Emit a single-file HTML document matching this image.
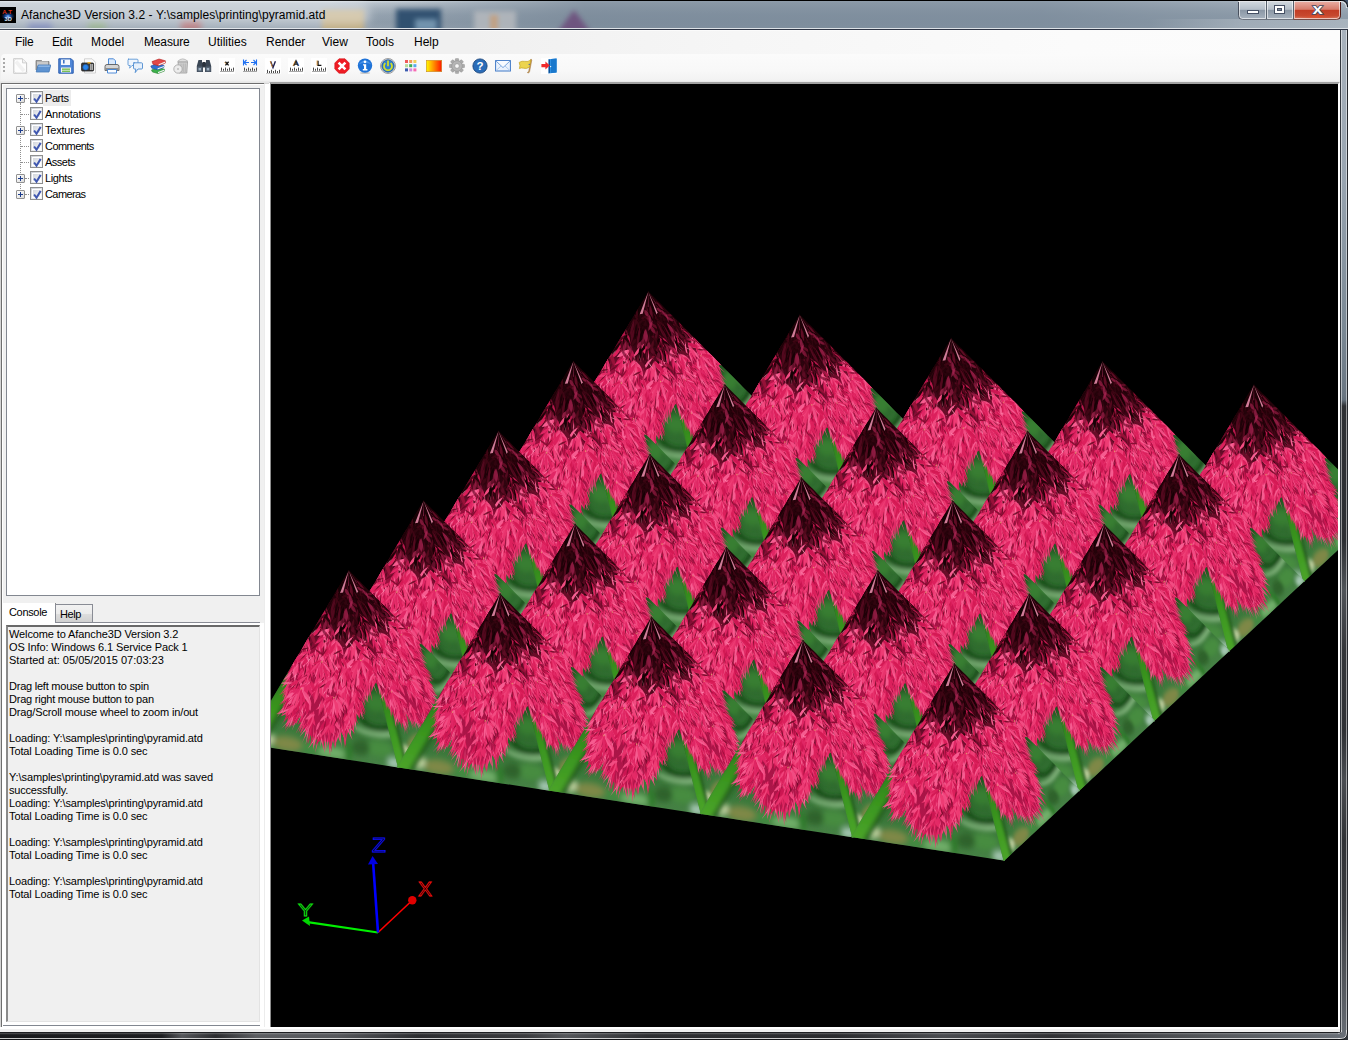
<!DOCTYPE html>
<html lang="en">
<head>
<meta charset="utf-8">
<title>Afanche3D Version 3.2 - Y:\samples\printing\pyramid.atd</title>
<style>
html,body{margin:0;padding:0;}
body{width:1348px;height:1040px;overflow:hidden;position:relative;background:#f0f0f0;font-family:"Liberation Sans",sans-serif;color:#000;}
.abs{position:absolute;}
svg{display:block;}
#titlebar{left:0;top:0;width:1348px;height:31px;background:linear-gradient(180deg,#000 0,#000 1px,#dfe5ea 1px,#c3ccd5 3px,#aab5c0 9px,#99a6b3 15px,#92a0ad 22px,#97a4b0 28px,#dde2e7 28px,#dde2e7 29px,#2e3545 29px,#2e3545 30px,#fbfbfb 30px,#fbfbfb 31px);}
#titleglow{left:-30px;top:4px;width:400px;height:22px;border-radius:11px;background:rgba(255,255,255,.42);filter:blur(5px);}
#tright{left:330px;top:1px;width:1018px;height:27px;background:linear-gradient(90deg,rgba(120,135,150,0) 0,rgba(118,134,150,.75) 25%,rgba(122,138,154,.8) 70%,rgba(135,150,164,.5) 100%);}
#title{left:21px;top:8px;font-size:12px;line-height:15px;white-space:nowrap;letter-spacing:.07px;}
#appicon{left:0;top:7px;width:16px;height:16px;background:#000;overflow:hidden;}
#menubar{left:0;top:31px;width:1340px;height:23px;background:linear-gradient(90deg,#f0f0f0 0,#f0f0f0 35%,#f6f6f6 55%,#fbfbfb 80%,#fcfcfc 100%);}
.mi{position:absolute;top:35px;font-size:12px;line-height:15px;white-space:nowrap;}
#toolbar{left:1px;top:54px;width:1339px;height:28px;background:linear-gradient(180deg,#fbfbfb 0,#f8f8f8 60%,#f1f1f1 100%);border-top-left-radius:4px;}
#tbshadow{left:0;top:81px;width:1340px;height:3px;background:linear-gradient(180deg,#ececec 0,#e4e4e4 2px,#c8c8c8 3px);}
.ic{position:absolute;top:58px;width:16px;height:16px;}
.ic svg{display:block;}
#rframe{left:1340px;top:30px;width:8px;height:1010px;background:linear-gradient(90deg,#33383f 0,#33383f 1px,rgba(255,255,255,.5) 1px,rgba(255,255,255,.5) 2px,rgba(255,255,255,0) 2px,rgba(255,255,255,0) 6px,rgba(255,255,255,.5) 6px,rgba(255,255,255,.5) 7px,#26292e 7px),linear-gradient(180deg,#a8b2bc 0,#98a4b0 150px,#7a8894 300px,#6a7682 365px,#64707c 370px,#2e3034 376px,#2c2e32 510px,#505459 560px,#34363a 620px,#2e3034 700px,#4a4d52 750px,#303236 810px,#393b3f 880px,#565a60 960px,#686e76 1010px);}
#bframe{left:0;top:1032px;width:1348px;height:8px;background:linear-gradient(180deg,#1e1f22 0,#1e1f22 1px,rgba(255,255,255,.28) 1px,rgba(255,255,255,.1) 2px,rgba(255,255,255,0) 3px,rgba(255,255,255,0) 6px,rgba(235,235,235,.85) 6px,rgba(235,235,235,.85) 7px,#141518 7px),linear-gradient(90deg,#1a1b1e 0,#1c1d20 12%,#55575b 13.5%,#2a2b2e 16%,#5c5e62 19%,#56585c 25%,#2c2d30 31%,#3a3b3e 39%,#55575b 42%,#2e2f32 48%,#2a2b2e 62%,#4a4c50 70%,#303134 78%,#55585c 90%,#6a7078 100%);}
#leftpanel{left:2px;top:84px;width:262px;height:943px;background:#f0f0f0;}
#tabpage{left:2px;top:623px;width:262px;height:404px;background:#fff;}
#lpbot{left:2px;top:1025px;width:258px;height:1px;background:#828790;}
#lpedge{left:0;top:83px;width:3px;height:949px;background:linear-gradient(90deg,#d4d4d4 0,#d4d4d4 1px,#6e6e6e 1px,#6e6e6e 2px,#fff 2px);}
#lptop{left:1px;top:83px;width:263px;height:1px;background:#6e6e6e;}
#lptop2{left:2px;top:84px;width:262px;height:1px;background:#fff;}
#treebox{left:6px;top:88px;width:254px;height:508px;box-sizing:border-box;border:1px solid #828790;background:#fff;}
.tr{position:absolute;left:45px;font-size:11px;line-height:13px;white-space:nowrap;}
.cb{position:absolute;left:30px;width:13px;height:13px;box-sizing:border-box;border:1px solid #8e8f8f;background:linear-gradient(135deg,#c9cdd5 0%,#e4e6ea 50%,#f8f9fa 100%);}
.cb::after{content:"";position:absolute;left:1px;top:1px;right:1px;bottom:1px;border:1px solid #fff;}
.cb svg{position:absolute;left:0;top:0;z-index:2;}
.pl{position:absolute;left:16px;width:9px;height:9px;box-sizing:border-box;border:1px solid #919191;background:linear-gradient(135deg,#fff,#dcdcdc);border-radius:1px;}
.pl::before{content:"";position:absolute;left:1px;top:3px;width:5px;height:1px;background:#1c3c8c;}
.pl::after{content:"";position:absolute;left:3px;top:1px;width:1px;height:5px;background:#1c3c8c;}
.dotv{position:absolute;left:20px;width:0;border-left:1px dotted #909090;}
.doth{position:absolute;height:0;border-top:1px dotted #909090;}
#tabline{left:56px;top:622px;width:204px;height:1px;background:#898c95;}
#tab1{left:2px;top:603px;width:53px;height:21px;background:#fff;border-right:1px solid #fff;box-shadow:inset -1px 0 0 #fff;}
#tab1c{left:55px;top:603px;width:1px;height:2px;background:#8c8c8c;}
#tab2{left:55px;top:604px;width:38px;height:19px;box-sizing:border-box;border:1px solid #898c95;border-bottom:none;background:linear-gradient(180deg,#f2f2f2 0,#ebebeb 50%,#dddddd 50%,#cfcfcf 100%);}
.tabt{position:absolute;font-size:11px;line-height:13px;white-space:nowrap;}
#console{left:6px;top:625px;width:254px;height:397px;box-sizing:border-box;border:1px solid #a0a0a0;border-top:2px solid #696969;border-left:2px solid #8a8a8a;border-right-color:#e3e3e3;border-bottom-color:#e3e3e3;background:#f0f0f0;}
#ctext{left:9px;top:628px;width:246px;font-size:11px;line-height:13px;white-space:pre;margin:0;}
#ctext div{height:13px;}
#splitter{left:264px;top:84px;width:6px;height:943px;background:linear-gradient(90deg,#ececec 0,#ececec 1px,#fff 1px);}
#vpborder{left:269px;top:82px;width:1071px;height:947px;box-sizing:border-box;border:2px solid #fff;border-top:2px solid #a2a2a2;border-left:2px solid #a8a8a8;border-left-color:#fff;background:#000;}
#vpl{left:270px;top:83px;width:1px;height:944px;background:#8c8c8c;}
#scenewrap{left:271px;top:84px;width:1067px;height:943px;overflow:hidden;background:#000;}
#botstrip{left:0;top:1027px;width:1340px;height:5px;background:linear-gradient(180deg,#fff 0,#fff 2px,#f0f0f0 2px,#f0f0f0 5px);}
#capbtns{left:1238px;top:1px;width:104px;height:20px;}
</style>
</head>
<body>
<div id="titlebar" class="abs"></div>
<div id="tright" class="abs"></div>
<div class="abs" style="left:0;top:1px;width:1240px;height:27px;overflow:hidden">
<div class="abs" style="left:322px;top:9px;width:42px;height:22px;background:#c2a56a;opacity:.8;filter:blur(2.5px)"></div>
<div class="abs" style="left:396px;top:8px;width:45px;height:24px;background:#27496a;opacity:.9;filter:blur(2.5px)"></div>
<div class="abs" style="left:415px;top:18px;width:22px;height:12px;background:#8fb0c8;opacity:.7;filter:blur(2.5px)"></div>
<div class="abs" style="left:474px;top:10px;width:42px;height:22px;background:#b9bcc0;opacity:.8;filter:blur(2.5px)"></div>
<div class="abs" style="left:490px;top:14px;width:8px;height:16px;background:#c89a70;opacity:.7;filter:blur(2px)"></div>
<div class="abs" style="left:556px;top:9px;width:0;height:0;border-left:18px solid transparent;border-right:18px solid transparent;border-bottom:24px solid #6b4778;opacity:.8;filter:blur(2.5px)"></div>
<div class="abs" style="left:28px;top:21px;width:24px;height:8px;background:#4a58b0;opacity:.55;filter:blur(3px)"></div>
<div class="abs" style="left:88px;top:21px;width:18px;height:8px;background:#7aa84a;opacity:.5;filter:blur(3px)"></div>
<div class="abs" style="left:181px;top:20px;width:20px;height:9px;background:#c03a3a;opacity:.6;filter:blur(3px)"></div>
</div>
<div id="titleglow" class="abs"></div>
<div id="appicon" class="abs"><svg width="16" height="16" viewBox="0 0 16 16"><rect width="16" height="16" fill="#000"/><defs><radialGradient id="aig"><stop offset="0" stop-color="#9fd0ff"/><stop offset=".3" stop-color="#2a6ad0" stop-opacity=".9"/><stop offset="1" stop-color="#0a2a70" stop-opacity="0"/></radialGradient></defs><ellipse cx="8" cy="9.2" rx="7" ry="4.2" fill="url(#aig)"/><text x="2.2" y="7" font-family="Liberation Sans, sans-serif" font-size="6.2" font-weight="bold" fill="#d8321c">A T</text><text x="4.6" y="14.4" font-family="Liberation Sans, sans-serif" font-size="5.6" font-weight="bold" fill="#dfe8f6">3D</text></svg></div>
<div id="title" class="abs">Afanche3D Version 3.2 - Y:\samples\printing\pyramid.atd</div>
<div id="capbtns" class="abs"><svg width="104" height="20" viewBox="0 0 104 20">
<defs>
<linearGradient id="cbg" x1="0" y1="0" x2="0" y2="1"><stop offset="0" stop-color="#d3dae0"/><stop offset=".45" stop-color="#b4bec8"/><stop offset=".5" stop-color="#8b97a5"/><stop offset="1" stop-color="#a9b4c0"/></linearGradient>
<linearGradient id="cbr" x1="0" y1="0" x2="0" y2="1"><stop offset="0" stop-color="#eab0a6"/><stop offset=".45" stop-color="#d67c6c"/><stop offset=".5" stop-color="#c23c24"/><stop offset=".8" stop-color="#c64a30"/><stop offset="1" stop-color="#e08a72"/></linearGradient>
<radialGradient id="cbglow" cx=".5" cy=".75" r=".5"><stop offset="0" stop-color="#e2502c" stop-opacity=".9"/><stop offset="1" stop-color="#c23c24" stop-opacity="0"/></radialGradient>
</defs>
<path d="M.5 0V14.5Q.5 18.5 4.5 18.5H98.5Q102.5 18.5 102.5 14.5V0Z" fill="url(#cbg)" stroke="#48505e" stroke-width="1"/>
<path d="M55.5 0V18.5H98.5Q102.5 18.5 102.5 14.5V0Z" fill="url(#cbr)" stroke="#4e1a14" stroke-width="1"/>
<rect x="60" y="8" width="38" height="10" fill="url(#cbglow)"/>
<path d="M1.5 0V14.5Q1.5 17.5 4.5 17.5H27.5V0M29.5 0V17.5H54.5V0M56.5 0V17.5H98.5Q101.5 17.5 101.5 14.5V0" fill="none" stroke="rgba(255,255,255,.6)" stroke-width="1"/>
<path d="M0 .5H103" stroke="rgba(255,255,255,.75)"/>
<line x1="28.5" y1="0" x2="28.5" y2="18" stroke="#56606c"/>
<line x1="55.5" y1="0" x2="55.5" y2="18" stroke="#56606c"/>
<rect x="9.5" y="9.5" width="11" height="3" fill="#fff" stroke="#465064" stroke-width="1"/>
<rect x="36.5" y="4.5" width="10" height="8" fill="#fff" stroke="#465064" stroke-width="1"/>
<rect x="39.5" y="7.5" width="4" height="2" fill="#7f8b99" stroke="#465064" stroke-width="1"/>
<text x="74.4" y="13.4" font-family="Liberation Sans, sans-serif" font-weight="bold" font-size="15.5" fill="#fff" stroke="#3d4862" stroke-width="1.5" paint-order="stroke" textLength="10.2" lengthAdjust="spacingAndGlyphs">x</text>
</svg></div>
<div class="abs" style="left:1150px;top:19px;width:198px;height:9px;background:linear-gradient(90deg,rgba(255,255,255,0),rgba(255,255,255,.2) 45%,rgba(255,255,255,.24))"></div>
<div class="abs" style="left:1340px;top:0;width:8px;height:8px"><svg width="8" height="8" viewBox="0 0 8 8"><path d="M1 0Q8 0 8 7V0Z" fill="#41536a"/><path d="M1 .5Q7.5 .5 7.5 7" fill="none" stroke="#10141a" stroke-width="1.2"/><path d="M0 1.5Q6.4 1.6 6.5 8" fill="none" stroke="rgba(255,255,255,.75)" stroke-width="1"/></svg></div>

<div id="menubar" class="abs"></div>
<div class="mi" style="left:15px;letter-spacing:-.2px">File</div>
<div class="mi" style="left:52px;letter-spacing:-.15px">Edit</div>
<div class="mi" style="left:91px;letter-spacing:.15px">Model</div>
<div class="mi" style="left:144px;letter-spacing:-.15px">Measure</div>
<div class="mi" style="left:208px">Utilities</div>
<div class="mi" style="left:266px">Render</div>
<div class="mi" style="left:322px">View</div>
<div class="mi" style="left:366px">Tools</div>
<div class="mi" style="left:414px">Help</div>

<div id="toolbar" class="abs"></div>
<div id="tbshadow" class="abs"></div>
<div class="ic" style="left:12px"><svg width="16" height="16" viewBox="0 0 16 16"><path d="M1.8 .8H10.5L14.6 4.9V15.2H1.8Z" fill="#fdfdfd" stroke="#bdbdbd" stroke-width=".9"/><path d="M10.5 .8V4.9H14.6" fill="#f2f2f2" stroke="#c8c8c8" stroke-width=".8"/><path d="M4 3.5L12 13" stroke="#f1f1f1" stroke-width="3.5"/><circle cx="2.3" cy="14.7" r=".8" fill="#fff" stroke="#bdbdbd" stroke-width=".4"/><circle cx="14.1" cy="14.7" r=".8" fill="#fff" stroke="#bdbdbd" stroke-width=".4"/><circle cx="2.3" cy="1.3" r=".8" fill="#fff" stroke="#bdbdbd" stroke-width=".4"/></svg></div>
<div class="ic" style="left:35px"><svg width="16" height="16" viewBox="0 0 16 16"><path d="M1 2.5H6.5L7.5 3.5H14V12H1Z" fill="#9a9a9a" stroke="#7d7d7d" stroke-width=".8"/><path d="M2 3.5H13V8H2Z" fill="#c9c9c9"/><path d="M3.2 7H15.8L14 14H1.2Z" fill="#5e93d1" stroke="#4478b8" stroke-width=".8"/><path d="M3.6 7.6H15L14.6 9H3.2Z" fill="#8ab4e4"/></svg></div>
<div class="ic" style="left:58px"><svg width="16" height="16" viewBox="0 0 16 16"><path d="M.8 .8H13.2L15.2 2.8V15.2H.8Z" fill="#4f86d6" stroke="#2a5cae" stroke-width="1"/><rect x="3" y="1.5" width="9" height="5.5" fill="#f4f7fc"/><rect x="5" y="2" width="1.6" height="3.5" fill="#3f74c4"/><rect x="3" y="9.5" width="10" height="5" fill="#f6f6f6"/><rect x="4" y="10.5" width="8" height="1.3" fill="#6cb844"/><rect x="4" y="12.6" width="8" height="1.3" fill="#6cb844"/></svg></div>
<div class="ic" style="left:81px"><svg width="16" height="16" viewBox="0 0 16 16"><path d="M3.5 .8H11L14.5 4.3V15H3.5Z" fill="#fcfcfc" stroke="#c6c6c6" stroke-width=".8"/><rect x=".6" y="5" width="12" height="8" rx="1" fill="#3c3c3c" stroke="#1d1d1d" stroke-width=".8"/><rect x="6.5" y="4" width="3" height="1.6" fill="#e9b030"/><rect x="9.3" y="6" width="1.2" height="6" fill="#d8d8d8"/><rect x="11" y="6" width=".9" height="6" fill="#bdbdbd"/><circle cx="4.6" cy="9.2" r="2.8" fill="#2b86ea" stroke="#1a56a8" stroke-width=".6"/></svg></div>
<div class="ic" style="left:104px"><svg width="16" height="16" viewBox="0 0 16 16"><path d="M4.5 .8H9.5L11.5 2.8V7H4.5Z" fill="#d9e8fb" stroke="#3c80d4" stroke-width=".9"/><path d="M1 8.5Q1 6.5 3 6.5H13Q15 6.5 15 8.5V12.5H1Z" fill="#d5d5d5" stroke="#5d5d5d" stroke-width=".9"/><rect x="1.4" y="10" width="13.2" height="2.4" fill="#8e8e8e"/><path d="M3.5 11.5H12.5V15H3.5Z" fill="#fafcff" stroke="#3c80d4" stroke-width=".9"/></svg></div>
<div class="ic" style="left:127px"><svg width="16" height="16" viewBox="0 0 16 16"><path d="M1 1.2H10Q11 1.2 11 2.2V6.5Q11 7.5 10 7.5H5L2.6 10.2L3.2 7.5H2Q1 7.5 1 6.5V2.2Q1 1.2 2 1.2Z" fill="#eef5fd" stroke="#5d97d6" stroke-width=".9"/><path d="M6.5 4.8H14.5Q15.5 4.8 15.5 5.8V10Q15.5 11 14.5 11H11L8.2 14.6L8.8 11H7.5Q6.5 11 6.5 10V5.8Q6.5 4.8 7.5 4.8Z" fill="#e6f0fb" stroke="#4d8bd0" stroke-width=".9"/></svg></div>
<div class="ic" style="left:150px"><svg width="16" height="16" viewBox="0 0 16 16"><path d="M1.5 12L8 9.5L14.5 11.2V13L8 15.5L2.5 14Z" fill="#3db04a" stroke="#23802e" stroke-width=".6"/><path d="M8 15.2L14.5 12.8V11.6L8 14Z" fill="#f4f4f4"/><path d="M.8 8L7 5.6L14 7.4V9.2L7.6 11.8L1.8 10.2Z" fill="#2f6fd0" stroke="#1c4e9e" stroke-width=".6"/><path d="M7.6 11.4L14 9V7.9L7.6 10.3Z" fill="#f4f4f4"/><path d="M2 3.6L9 1L15.4 2.8V5L8.6 7.8L3 6.2Z" fill="#e24848" stroke="#b42424" stroke-width=".6"/><path d="M8.6 7.4L15.2 4.7V3.6L8.6 6.2Z" fill="#f6f6f6"/></svg></div>
<div class="ic" style="left:173px"><svg width="16" height="16" viewBox="0 0 16 16"><path d="M5 4H14.5L13.8 15H6Z" fill="#d0d0d0" stroke="#9a9a9a" stroke-width=".8"/><path d="M4.6 3.4Q9.6 -1.6 15 3.4Z" fill="#e3e3e3" stroke="#a6a6a6" stroke-width=".7"/><path d="M8 5.5V14M10.2 5.5V14M12.2 5.5V14" stroke="#aaa" stroke-width=".8"/><circle cx="5" cy="11" r="4.2" fill="#ececec" stroke="#a2a2a2" stroke-width=".8"/><circle cx="5" cy="11" r="1" fill="#bdbdbd"/></svg></div>
<div class="ic" style="left:196px"><svg width="16" height="16" viewBox="0 0 16 16"><path d="M2.5 2H6V5H10V2H13.5L15.2 8V14H9V9.5H7V14H.8V8Z" fill="#3a4654"/><rect x="1.4" y="8.6" width="5" height="5" fill="#566474"/><rect x="9.6" y="8.6" width="5" height="5" fill="#566474"/><rect x="2.6" y="10" width="2.4" height="2.4" fill="#9fb1c2"/><rect x="10.8" y="10" width="2.4" height="2.4" fill="#9fb1c2"/><rect x="6.4" y="4" width="3.2" height="4.6" fill="#2a323c"/></svg></div>
<div class="ic" style="left:219px"><svg width="16" height="16" viewBox="0 0 16 16"><rect width="16" height="16" fill="#fff"/><path d="M1 13.5H15" stroke="#a8a8a8" stroke-width="1"/><path d="M2.5 9.6V12.8M4.5 10.8V12.8M6.5 9.6V12.8M8.5 10.8V12.8M10.5 9.6V12.8M12.5 10.8V12.8M14.5 9.6V12.8" stroke="#3a3a3a" stroke-width=".9"/><path d="M6.4 3.8L9.6 7.4M9.6 3.8L6.4 7.4" stroke="#111" stroke-width="1.3"/><path d="M5.8 4.4L6.8 5.6" stroke="#e08a20" stroke-width="1"/></svg></div>
<div class="ic" style="left:242px"><svg width="16" height="16" viewBox="0 0 16 16"><path d="M1 13.5H15" stroke="#a8a8a8" stroke-width="1"/><path d="M2.5 9.6V12.8M4.5 10.8V12.8M6.5 9.6V12.8M8.5 10.8V12.8M10.5 9.6V12.8M12.5 10.8V12.8M14.5 9.6V12.8" stroke="#3a3a3a" stroke-width=".9"/><path d="M1.5 1.5V7.5M14.5 1.5V7.5M2 4.5H7M9 4.5H14M4.5 2L2 4.5L4.5 7M11.5 2L14 4.5L11.5 7" stroke="#1d6ff2" stroke-width="1.1" fill="none"/></svg></div>
<div class="ic" style="left:265px"><svg width="16" height="16" viewBox="0 0 16 16"><rect width="16" height="16" fill="#fff"/><path d="M1 15.9H15" stroke="#a8a8a8" stroke-width="1"/><path d="M2.5 11.8V15M4.5 13V15M6.5 11.8V15M8.5 13V15M10.5 11.8V15M12.5 13V15M14.5 11.8V15" stroke="#3a3a3a" stroke-width=".9"/><path d="M5.6 3.2L8 9.6L10.4 3.2" stroke="#1a1a4a" stroke-width="1.35" fill="none"/><path d="M5.2 3L7.4 9" stroke="#e08a20" stroke-width=".8" fill="none"/></svg></div>
<div class="ic" style="left:288px"><svg width="16" height="16" viewBox="0 0 16 16"><rect width="16" height="16" fill="#fff"/><path d="M1 13.5H15" stroke="#a8a8a8" stroke-width="1"/><path d="M2.5 9.6V12.8M4.5 10.8V12.8M6.5 9.6V12.8M8.5 10.8V12.8M10.5 9.6V12.8M12.5 10.8V12.8M14.5 9.6V12.8" stroke="#3a3a3a" stroke-width=".9"/><path d="M5.6 8L8 2.8L10.4 8M6.6 6.2H9.4" stroke="#111" stroke-width="1.25" fill="none"/><path d="M5 8L7.2 3" stroke="#e08a20" stroke-width=".7"/><path d="M10.9 8L9 3.4" stroke="#2a6ae0" stroke-width=".7"/></svg></div>
<div class="ic" style="left:311px"><svg width="16" height="16" viewBox="0 0 16 16"><rect width="16" height="16" fill="#fff"/><path d="M1 13.5H15" stroke="#a8a8a8" stroke-width="1"/><path d="M2.5 9.6V12.8M4.5 10.8V12.8M6.5 9.6V12.8M8.5 10.8V12.8M10.5 9.6V12.8M12.5 10.8V12.8M14.5 9.6V12.8" stroke="#3a3a3a" stroke-width=".9"/><path d="M7 2.8V7.4H10.4" stroke="#111" stroke-width="1.35" fill="none"/><path d="M6.1 2.5V7.5" stroke="#e08a20" stroke-width=".8"/></svg></div>
<div class="ic" style="left:334px"><svg width="16" height="16" viewBox="0 0 16 16"><path d="M5 .8H11L15.2 5V11L11 15.2H5L.8 11V5Z" fill="#ee1c24" stroke="#d01018" stroke-width=".6"/><path d="M4.6 4.6L11.4 11.4M11.4 4.6L4.6 11.4" stroke="#fff" stroke-width="2.6" stroke-linecap="butt"/></svg></div>
<div class="ic" style="left:357px"><svg width="16" height="16" viewBox="0 0 16 16"><ellipse cx="8" cy="15" rx="5" ry="1" fill="#c8c8c8"/><circle cx="8" cy="7.6" r="7.2" fill="#1f73d8"/><path d="M1.5 6.5Q8 -1.5 14.5 6.5Q8 3.6 1.5 6.5Z" fill="#5aa0ee" opacity=".7"/><circle cx="8" cy="3.8" r="1.35" fill="#fff"/><path d="M6 6.2H9.2V11H10.4V12.4H5.8V11H7V7.6H6Z" fill="#fff"/></svg></div>
<div class="ic" style="left:380px"><svg width="16" height="16" viewBox="0 0 16 16"><circle cx="8" cy="8" r="7.5" fill="#f2f2f2" stroke="#777" stroke-width=".7"/><circle cx="8" cy="8" r="6.2" fill="#2f7fd0" stroke="#1d4f8a" stroke-width=".8"/><path d="M5.4 5.2A4 4 0 1 0 10.6 5.2" fill="none" stroke="#d8e020" stroke-width="1.7"/><path d="M8 2.6V8.2" stroke="#d8e020" stroke-width="1.7"/></svg></div>
<div class="ic" style="left:403px"><svg width="16" height="16" viewBox="0 0 16 16"><rect x="2" y="2" width="3" height="3" fill="#ee5a5a"/><rect x="6.2" y="2" width="3" height="3" fill="#f49a5c"/><rect x="10.4" y="2" width="3" height="3" fill="#f0cf5a"/><rect x="2" y="6.2" width="3" height="3" fill="#b9dc9a"/><rect x="6.2" y="6.2" width="3" height="3" fill="#3cae54"/><rect x="10.4" y="6.2" width="3" height="3" fill="#58a8ec"/><rect x="2" y="10.4" width="3" height="3" fill="#3a5cae"/><rect x="6.2" y="10.4" width="3" height="3" fill="#d58ae0"/><rect x="10.4" y="10.4" width="3" height="3" fill="#f86ab0"/></svg></div>
<div class="ic" style="left:426px"><svg width="16" height="16" viewBox="0 0 16 16"><defs><linearGradient id="gr18" x1="0" y1="0" x2="1" y2="0"><stop offset="0" stop-color="#fffb00"/><stop offset=".5" stop-color="#ff8a00"/><stop offset="1" stop-color="#ff1400"/></linearGradient></defs><rect x=".3" y="2.3" width="15.4" height="11.4" fill="url(#gr18)" stroke="#c98a28" stroke-width=".6"/></svg></div>
<div class="ic" style="left:449px"><svg width="16" height="16" viewBox="0 0 16 16"><g transform="translate(8 8)"><g fill="#ababab" stroke="#8c8c8c" stroke-width=".4"><rect x="-1.7" y="-7.6" width="3.4" height="15.2" rx=".8"/><rect x="-1.7" y="-7.6" width="3.4" height="15.2" rx=".8" transform="rotate(45)"/><rect x="-1.7" y="-7.6" width="3.4" height="15.2" rx=".8" transform="rotate(90)"/><rect x="-1.7" y="-7.6" width="3.4" height="15.2" rx=".8" transform="rotate(135)"/></g><circle r="5.3" fill="#b5b5b5" stroke="#8e8e8e" stroke-width=".5"/><circle r="2.3" fill="#f7f7f7" stroke="#909090" stroke-width=".6"/></g></svg></div>
<div class="ic" style="left:472px"><svg width="16" height="16" viewBox="0 0 16 16"><circle cx="8" cy="8" r="7.1" fill="#2a6cb8" stroke="#1b467c" stroke-width=".9"/><text x="8" y="12.2" text-anchor="middle" font-family="Liberation Sans, sans-serif" font-weight="bold" font-size="11.5" fill="#fff">?</text></svg></div>
<div class="ic" style="left:495px"><svg width="16" height="16" viewBox="0 0 16 16"><rect x=".6" y="2.6" width="14.8" height="10.4" fill="#eaf2fd" stroke="#3f78c6" stroke-width="1"/><path d="M1 3L8 9.6L15 3" fill="#f8fbff" stroke="#7aa6de" stroke-width="1"/><path d="M1 12.6L6 8M15 12.6L10 8" stroke="#a9c6ea" stroke-width=".9"/></svg></div>
<div class="ic" style="left:518px"><svg width="16" height="16" viewBox="0 0 16 16"><path d="M12.6 1.4Q13.6 1 13.8 2L11.6 13.6Q11.2 15.2 9.8 15L9.4 14.4Q10.6 14.2 10.8 13Z" fill="#c99a58" stroke="#9a6c30" stroke-width=".5"/><path d="M1.2 4.4Q4 2.6 6.8 3.4Q10 4.2 12.8 2L11.4 9Q8.6 11.2 5.6 10.2Q3 9.4 1.4 10.6Q2.6 7.6 1.2 4.4Z" fill="#ecd44e" stroke="#c4a422" stroke-width=".7"/><circle cx="11.2" cy="6.4" r=".6" fill="#3a60b4"/></svg></div>
<div class="ic" style="left:541px"><svg width="16" height="16" viewBox="0 0 16 16"><rect width="16" height="16" fill="#fff"/><path d="M7.6 1.2L15.6 .6V14.6L7.6 15.6Z" fill="#2f8fe0"/><path d="M10 1L15.6 .6V14.6L10 15Z" fill="#1a78cc"/><path d="M7.6 1.2L9 1.8V14.6L7.6 15.6Z" fill="#0e4f94"/><circle cx="9.6" cy="8.6" r=".7" fill="#fff"/><path d="M.4 6H4.4V3.6L8.8 7.6L4.4 11.6V9.2H.4Z" fill="#f02a2a"/></svg></div>
<div class="abs" style="left:3px;top:58px;width:2px;height:14px;background:repeating-linear-gradient(180deg,#a9a9a9 0,#a9a9a9 2px,transparent 2px,transparent 4px)"></div>

<div id="rframe" class="abs"></div>
<div id="leftpanel" class="abs"></div>
<div id="tabpage" class="abs"></div><div id="splitter" class="abs"></div><div id="lpbot" class="abs"></div><div id="lpedge" class="abs"></div><div id="lptop" class="abs"></div><div id="lptop2" class="abs"></div>
<div id="treebox" class="abs"></div>
<div class="abs" style="left:43px;top:90px;width:28px;height:16px;background:#ececec"></div>
<div class="dotv" style="top:103px;height:86px"></div>
<div class="doth" style="left:25px;top:98px;width:4px"></div>
<div class="pl" style="top:94px"></div>
<div class="cb" style="top:91px"><svg width="13" height="13" viewBox="0 0 13 13"><path d="M3.1 6.5L5.5 9.7L9.7 2.9" fill="none" stroke="#4058b0" stroke-width="2" stroke-linejoin="miter"/></svg></div>
<div class="tr" style="top:92px;letter-spacing:-0.438px">Parts</div>
<div class="doth" style="left:21px;top:114px;width:8px"></div>
<div class="cb" style="top:107px"><svg width="13" height="13" viewBox="0 0 13 13"><path d="M3.1 6.5L5.5 9.7L9.7 2.9" fill="none" stroke="#4058b0" stroke-width="2" stroke-linejoin="miter"/></svg></div>
<div class="tr" style="top:108px;letter-spacing:-0.237px">Annotations</div>
<div class="doth" style="left:25px;top:130px;width:4px"></div>
<div class="pl" style="top:126px"></div>
<div class="cb" style="top:123px"><svg width="13" height="13" viewBox="0 0 13 13"><path d="M3.1 6.5L5.5 9.7L9.7 2.9" fill="none" stroke="#4058b0" stroke-width="2" stroke-linejoin="miter"/></svg></div>
<div class="tr" style="top:124px;letter-spacing:-0.21px">Textures</div>
<div class="doth" style="left:21px;top:146px;width:8px"></div>
<div class="cb" style="top:139px"><svg width="13" height="13" viewBox="0 0 13 13"><path d="M3.1 6.5L5.5 9.7L9.7 2.9" fill="none" stroke="#4058b0" stroke-width="2" stroke-linejoin="miter"/></svg></div>
<div class="tr" style="top:140px;letter-spacing:-0.548px">Comments</div>
<div class="doth" style="left:21px;top:162px;width:8px"></div>
<div class="cb" style="top:155px"><svg width="13" height="13" viewBox="0 0 13 13"><path d="M3.1 6.5L5.5 9.7L9.7 2.9" fill="none" stroke="#4058b0" stroke-width="2" stroke-linejoin="miter"/></svg></div>
<div class="tr" style="top:156px;letter-spacing:-0.519px">Assets</div>
<div class="doth" style="left:25px;top:178px;width:4px"></div>
<div class="pl" style="top:174px"></div>
<div class="cb" style="top:171px"><svg width="13" height="13" viewBox="0 0 13 13"><path d="M3.1 6.5L5.5 9.7L9.7 2.9" fill="none" stroke="#4058b0" stroke-width="2" stroke-linejoin="miter"/></svg></div>
<div class="tr" style="top:172px;letter-spacing:-0.393px">Lights</div>
<div class="doth" style="left:25px;top:194px;width:4px"></div>
<div class="pl" style="top:190px"></div>
<div class="cb" style="top:187px"><svg width="13" height="13" viewBox="0 0 13 13"><path d="M3.1 6.5L5.5 9.7L9.7 2.9" fill="none" stroke="#4058b0" stroke-width="2" stroke-linejoin="miter"/></svg></div>
<div class="tr" style="top:188px;letter-spacing:-0.589px">Cameras</div>

<div id="tab1" class="abs"></div><div id="tab1c" class="abs"></div>
<div id="tab2" class="abs"></div>
<div id="tabline" class="abs"></div>
<div class="tabt" style="left:9px;top:606px;letter-spacing:-.33px">Console</div>
<div class="tabt" style="left:60px;top:608px;letter-spacing:-.45px">Help</div>
<div id="console" class="abs"></div>
<div id="ctext" class="abs"><div style="letter-spacing:-0.111px">Welcome to Afanche3D Version 3.2</div><div style="letter-spacing:-0.12px">OS Info: Windows 6.1 Service Pack 1</div><div style="letter-spacing:0.002px">Started at: 05/05/2015 07:03:23</div><div></div><div style="letter-spacing:-0.232px">Drag left mouse button to spin</div><div style="letter-spacing:-0.229px">Drag right mouse button to pan</div><div style="letter-spacing:-0.143px">Drag/Scroll mouse wheel to zoom in/out</div><div></div><div style="letter-spacing:-0.118px">Loading: Y:\samples\printing\pyramid.atd</div><div style="letter-spacing:-0.116px">Total Loading Time is 0.0 sec</div><div></div><div style="letter-spacing:-0.11px">Y:\samples\printing\pyramid.atd was saved</div><div style="letter-spacing:-0.196px">successfully.</div><div style="letter-spacing:-0.118px">Loading: Y:\samples\printing\pyramid.atd</div><div style="letter-spacing:-0.116px">Total Loading Time is 0.0 sec</div><div></div><div style="letter-spacing:-0.118px">Loading: Y:\samples\printing\pyramid.atd</div><div style="letter-spacing:-0.116px">Total Loading Time is 0.0 sec</div><div></div><div style="letter-spacing:-0.118px">Loading: Y:\samples\printing\pyramid.atd</div><div style="letter-spacing:-0.116px">Total Loading Time is 0.0 sec</div></div>

<div id="vpborder" class="abs"></div><div id="vpl" class="abs"></div>
<div id="scenewrap" class="abs">
<svg id="scene" width="1067" height="943" viewBox="271 84 1067 943">
<defs>
<clipPath id="tri"><polygon points="50,-0.6 -0.9,100.5 100.9,100.5"/></clipPath>
<linearGradient id="gbg" x1="0" y1="0" x2="0" y2="1"><stop offset="0" stop-color="#1c4e1d"/><stop offset=".3" stop-color="#276026"/><stop offset=".6" stop-color="#347234"/><stop offset="1" stop-color="#478246"/></linearGradient>
<linearGradient id="fl" x1="0" y1="0" x2="0" y2="100" gradientUnits="userSpaceOnUse" ><stop offset="0" stop-color="#1c0206"/><stop offset=".27" stop-color="#2e040f"/><stop offset=".36" stop-color="#520a20"/><stop offset=".45" stop-color="#960f3c"/><stop offset=".7" stop-color="#a81446"/><stop offset="1" stop-color="#b8184e"/></linearGradient>
<linearGradient id="stem" x1="0" y1="60" x2="0" y2="100" gradientUnits="userSpaceOnUse"><stop offset="0" stop-color="#2e7c1e"/><stop offset=".5" stop-color="#3a961f"/><stop offset="1" stop-color="#4aa428"/></linearGradient>
<filter id="bl1" x="-20%" y="-20%" width="140%" height="140%"><feGaussianBlur stdDeviation="1.3"/></filter>
<filter id="bl2" x="-20%" y="-20%" width="140%" height="140%"><feGaussianBlur stdDeviation="1.6"/></filter>
<clipPath id="vp"><rect x="271" y="84" width="1067" height="943"/></clipPath>
</defs>
<rect x="271" y="84" width="1067" height="943" fill="#000"/>
<defs><g id="tex" clip-path="url(#tri)">
<rect x="-2" y="50" width="104" height="52" fill="url(#gbg)"/>
<g filter="url(#bl2)">
<ellipse cx="80" cy="68" rx="7" ry="5" fill="#387e33"/>
<ellipse cx="91" cy="71" rx="5" ry="3.5" fill="#4a9040"/>
<ellipse cx="86" cy="92" rx="9" ry="4.5" fill="#468c40"/>
<ellipse cx="74" cy="93" rx="6" ry="4" fill="#2e622a"/>
<ellipse cx="97" cy="98.5" rx="5" ry="3" fill="#a6c8b4"/>
<ellipse cx="56" cy="98" rx="11" ry="3" fill="#72b06a"/>
<ellipse cx="42" cy="97" rx="6" ry="3" fill="#428c40"/>
<ellipse cx="26" cy="97" rx="10" ry="4" fill="#7f8846"/>
<ellipse cx="13" cy="96" rx="4.5" ry="3.5" fill="#c2d2a2"/>
<ellipse cx="66" cy="96" rx="2.5" ry="6" fill="#2f7a2a" transform="rotate(-20 66 96)"/>
</g>
<g filter="url(#bl1)">
<polygon points="19,60 27.5,60 6.8,102 -3,102" fill="url(#stem)"/>
<polygon points="27.5,60 30,62 9.6,102 6.8,102" fill="#245a1b"/>
<path d="M68 60Q68 76 78 79.5Q87 81.5 97 75.5L97 80Q85 84.2 76 81.6Q65.5 78 66.5 60Z" fill="#164a18"/>
<path d="M68.5 81.6Q80 86.4 97 81.4L97 83.6Q80 88.2 68.5 83.4Z" fill="#9cc894"/>
</g>
<polygon points="50,-2 -2,57.5 20.8,59.5 20.6,70 22,79.5 25.5,85 29.5,84 32.3,79 34.2,86 38.5,90 45,92.3 52,92.8 57,91.2 60.2,86 62.3,87.6 65.2,83.5 67.6,77.5 68.2,72 70,73.5 71,67.5 72.2,62.5 77,57.5 102,56.5" fill="url(#fl)"/>
<path d="M50.2 3Q50.3 6.9 53.8 9.7Q53.4 5.2 50.2 3Z" fill="#1e0208"/>
<path d="M54 5.5Q53.7 9 56.3 12.4Q56.3 8.2 54 5.5Z" fill="#2a040d"/>
<path d="M47.5 6.2Q48.8 10.2 53.5 11.7Q51.6 7.1 47.5 6.2Z" fill="#1e0208"/>
<path d="M50.6 5.4Q48.6 9.6 49.4 15.2Q51.5 10 50.6 5.4Z" fill="#1e0208"/>
<path d="M49.8 6.7Q46.3 7.1 44.9 11Q48.9 10.1 49.8 6.7Z" fill="#3e0614"/>
<path d="M46.6 7Q44.6 10.8 46.9 15.1Q48.9 10.6 46.6 7Z" fill="#30050f"/>
<path d="M48.5 6.8Q48.6 10.6 52.1 13.3Q51.7 8.9 48.5 6.8Z" fill="#52091e"/>
<path d="M48.4 6.9Q48.5 11.2 52.8 14Q52.3 8.9 48.4 6.9Z" fill="#30050f"/>
<path d="M47.6 10.1Q44.4 10.5 42.5 14Q46.3 13.1 47.6 10.1Z" fill="#5e0c24"/>
<path d="M49.6 6.7Q49.5 11.8 52.9 16.9Q52.7 10.8 49.6 6.7Z" fill="#52091e"/>
<path d="M45.2 9Q46.3 13.6 50.9 16.9Q49.2 11.5 45.2 9Z" fill="#24030a"/>
<path d="M47.1 5.7Q45.6 10 48.7 14.5Q50 9.3 47.1 5.7Z" fill="#24030a"/>
<path d="M53.5 7.6Q52.8 10.6 55 13.5Q55.6 9.9 53.5 7.6Z" fill="#2a040d"/>
<path d="M52.1 6.5Q51.8 11.3 55.3 15.7Q55.3 10.1 52.1 6.5Z" fill="#5e0c24"/>
<path d="M48.8 9.1Q51.3 13 56.3 15.2Q53.1 10.7 48.8 9.1Z" fill="#160205"/>
<path d="M47.8 7.4Q43.8 8.8 42.7 13.8Q47.3 11.6 47.8 7.4Z" fill="#1e0208"/>
<path d="M48.8 6Q47.1 10.3 50.1 14.8Q51.7 9.6 48.8 6Z" fill="#2a040d"/>
<path d="M47.4 6.2Q43.6 9.2 41.9 14.8Q46.4 11 47.4 6.2Z" fill="#160205"/>
<path d="M48 6.4Q44.5 8.8 45.4 13.6Q49.2 10.5 48 6.4Z" fill="#160205"/>
<path d="M44 8.8Q43.2 12.3 45.2 16.1Q45.8 11.9 44 8.8Z" fill="#3e0614"/>
<path d="M50.7 12.9Q51.5 17.2 56.1 19.3Q54.8 14.4 50.7 12.9Z" fill="#5e0c24"/>
<path d="M45.8 13.4Q44.3 17 46.8 20.8Q48.2 16.5 45.8 13.4Z" fill="#2a040d"/>
<path d="M48 11.7Q48.6 15.9 52.1 19.7Q51.1 14.6 48 11.7Z" fill="#30050f"/>
<path d="M53.2 12.2Q52.3 15 54.8 17.3Q55.6 14 53.2 12.2Z" fill="#2a040d"/>
<path d="M53.8 14.7Q52.9 19 54.6 24.1Q55.4 18.8 53.8 14.7Z" fill="#30050f"/>
<path d="M44.3 14.1Q40.7 19.1 42 26.2Q45.8 20.1 44.3 14.1Z" fill="#1e0208"/>
<path d="M50.4 14.5Q48.8 18.5 52.5 21.9Q53.9 17.1 50.4 14.5Z" fill="#24030a"/>
<path d="M52.3 11.6Q48.5 12.6 46.9 17.1Q51.3 15.4 52.3 11.6Z" fill="#3e0614"/>
<path d="M57.6 13.2Q58.6 16.3 62.3 16.6Q60.9 13.2 57.6 13.2Z" fill="#30050f"/>
<path d="M53.8 11.9Q51.2 15.6 52 20.9Q54.7 16.2 53.8 11.9Z" fill="#30050f"/>
<path d="M50.9 15.3Q49.7 21.6 52.9 28.5Q53.9 21 50.9 15.3Z" fill="#52091e"/>
<path d="M52.4 14.1Q51.1 18.3 54.1 22.6Q55.2 17.5 52.4 14.1Z" fill="#52091e"/>
<path d="M54 14.8Q50 16.1 48.7 20.9Q53.2 18.9 54 14.8Z" fill="#2a040d"/>
<path d="M42.7 15Q38.8 19.5 38.4 26.6Q42.8 20.9 42.7 15Z" fill="#30050f"/>
<path d="M49.6 14.1Q51.3 19.3 57.5 21.3Q54.9 15.4 49.6 14.1Z" fill="#2a040d"/>
<path d="M49 13.4Q45.2 15.6 43.9 20.7Q48.2 17.7 49 13.4Z" fill="#3e0614"/>
<path d="M43.3 13.3Q44.5 18 49.3 21Q47.5 15.6 43.3 13.3Z" fill="#3e0614"/>
<path d="M51 15.3Q50.1 19.7 54 23.2Q54.6 18 51 15.3Z" fill="#3e0614"/>
<path d="M41.2 16.2Q37.1 19.4 35.8 25.4Q40.5 21.3 41.2 16.2Z" fill="#3e0614"/>
<path d="M45.4 13.5Q46 17.6 50.6 19.2Q49.5 14.5 45.4 13.5Z" fill="#24030a"/>
<path d="M44.4 15.2Q40.5 16.1 38.3 20.3Q42.8 18.9 44.4 15.2Z" fill="#3e0614"/>
<path d="M43.2 14.4Q44.8 19.1 50.2 21.3Q47.9 15.9 43.2 14.4Z" fill="#2a040d"/>
<path d="M49.8 17.4Q46.5 22.7 48.2 29.9Q51.6 23.3 49.8 17.4Z" fill="#1e0208"/>
<path d="M43.2 13Q39.5 17.6 38.3 24.6Q42.4 18.9 43.2 13Z" fill="#1e0208"/>
<path d="M50 15.1Q52.3 19 57.3 20.9Q54.3 16.4 50 15.1Z" fill="#5e0c24"/>
<path d="M42.8 14.3Q44.1 19.6 49.7 22.7Q47.7 16.7 42.8 14.3Z" fill="#1e0208"/>
<path d="M53.7 13.9Q50.2 15 49.6 19.2Q53.5 17.6 53.7 13.9Z" fill="#3e0614"/>
<path d="M53.9 15.8Q50.8 17.6 50 21.7Q53.5 19.3 53.9 15.8Z" fill="#5e0c24"/>
<path d="M50.2 14.2Q46 16.1 43.2 20.9Q48.1 18.3 50.2 14.2Z" fill="#30050f"/>
<path d="M53.6 18.1Q53.8 22.3 58 24.7Q57.4 19.9 53.6 18.1Z" fill="#52091e"/>
<path d="M49.3 16.9Q50.7 21.2 55.4 23.7Q53.5 18.7 49.3 16.9Z" fill="#30050f"/>
<path d="M42.9 18Q39.6 22.7 38.9 29.6Q42.6 23.7 42.9 18Z" fill="#1e0208"/>
<path d="M53 14.7Q49.6 17.4 48.7 22.6Q52.6 19.1 53 14.7Z" fill="#30050f"/>
<path d="M44.5 15Q43.6 20.9 46.5 27.5Q47.2 20.3 44.5 15Z" fill="#1e0208"/>
<path d="M43.3 15.2Q44.4 19.2 48.9 21.2Q47.3 16.6 43.3 15.2Z" fill="#3e0614"/>
<path d="M49.3 18.2Q46.7 22.2 46.9 27.8Q49.7 22.9 49.3 18.2Z" fill="#2a040d"/>
<path d="M51 14.9Q49.7 21.1 51.8 28.5Q52.9 20.9 51 14.9Z" fill="#30050f"/>
<path d="M49.8 14.2Q51.4 18 55.7 20.2Q53.6 15.9 49.8 14.2Z" fill="#24030a"/>
<path d="M49.2 19.4Q45 21.3 43.4 26.6Q48.2 23.9 49.2 19.4Z" fill="#1e0208"/>
<path d="M43.5 15.7Q40.8 20.7 42.4 27.4Q45.3 21.2 43.5 15.7Z" fill="#52091e"/>
<path d="M50.8 14.5Q48.9 18.5 51.2 23.2Q53 18.3 50.8 14.5Z" fill="#30050f"/>
<path d="M49.1 19.3Q49 22.4 51.5 25.1Q51.4 21.4 49.1 19.3Z" fill="#24030a"/>
<path d="M53 15.9Q56.3 18.9 61.6 19.3Q57.4 16 53 15.9Z" fill="#5e0c24"/>
<path d="M44.5 14.5Q43.1 19.2 46.2 23.9Q47.4 18.4 44.5 14.5Z" fill="#3e0614"/>
<path d="M59.9 18.5Q57.5 22.4 58.1 27.7Q60.7 23 59.9 18.5Z" fill="#52091e"/>
<path d="M51.4 18.1Q52.4 22.4 57.4 23Q55.8 18.2 51.4 18.1Z" fill="#24030a"/>
<path d="M44.3 17.9Q42.6 22.3 44 27.7Q45.8 22.4 44.3 17.9Z" fill="#3e0614"/>
<path d="M45.6 17.5Q44 20.2 45.2 23.8Q46.9 20.4 45.6 17.5Z" fill="#1e0208"/>
<path d="M40.3 16.7Q37.4 18.4 38 22.2Q41.2 19.9 40.3 16.7Z" fill="#1e0208"/>
<path d="M50.3 21Q50.6 23.6 53.4 25.1Q52.7 22 50.3 21Z" fill="#5e0c24"/>
<path d="M53.1 19.5Q52 25.8 55.6 32.7Q56.4 25 53.1 19.5Z" fill="#2a040d"/>
<path d="M49.6 18Q51.6 22 56.7 23.5Q54 19 49.6 18Z" fill="#24030a"/>
<path d="M64.5 22Q60.8 26.4 61.3 33.2Q65.3 27.7 64.5 22Z" fill="#5e0c24"/>
<path d="M51.1 18.5Q48.7 22.4 49.3 27.9Q51.8 23 51.1 18.5Z" fill="#2a040d"/>
<path d="M51.5 19.7Q50.8 23.9 55.1 25.9Q55.4 21.1 51.5 19.7Z" fill="#52091e"/>
<path d="M52.4 16.5Q51.4 21.9 54.6 27.7Q55.3 21.2 52.4 16.5Z" fill="#2a040d"/>
<path d="M62.9 21.4Q63.5 26.6 68.7 30Q67.6 23.9 62.9 21.4Z" fill="#1e0208"/>
<path d="M50.2 20.9Q49.9 26.6 55 31Q54.8 24.3 50.2 20.9Z" fill="#52091e"/>
<path d="M47.7 18.9Q46 25 47.9 32.5Q49.6 25 47.7 18.9Z" fill="#52091e"/>
<path d="M51.5 20.9Q51.8 24.9 55.4 28.1Q54.7 23.4 51.5 20.9Z" fill="#5e0c24"/>
<path d="M36.8 22.6Q32.6 24.8 31.4 30.2Q36.1 27.2 36.8 22.6Z" fill="#160205"/>
<path d="M38 20.7Q39.1 25 42.9 28.7Q41.3 23.6 38 20.7Z" fill="#680e28"/>
<path d="M49.8 18.9Q48.4 24.2 51 30.2Q52.2 23.8 49.8 18.9Z" fill="#30050f"/>
<path d="M59 18.5Q60.7 22.3 65 24.4Q62.8 20 59 18.5Z" fill="#160205"/>
<path d="M44.2 20.7Q41.9 24.7 42.9 30.1Q45.3 25.1 44.2 20.7Z" fill="#52091e"/>
<path d="M62.5 22.2Q59.6 24.5 58.9 29Q62.2 26 62.5 22.2Z" fill="#160205"/>
<path d="M41.2 23Q37.6 28.3 38.5 35.9Q42.4 29.3 41.2 23Z" fill="#30050f"/>
<path d="M40.2 23.2Q36.2 23.8 34 28Q38.7 27 40.2 23.2Z" fill="#2a040d"/>
<path d="M49 18.4Q48.5 22.4 52.5 24.5Q52.7 19.9 49 18.4Z" fill="#2a040d"/>
<path d="M64.5 21.5Q62 25.6 63.7 31Q66.4 25.9 64.5 21.5Z" fill="#30050f"/>
<path d="M63.1 21.3Q59.8 25.3 60.3 31.5Q63.9 26.5 63.1 21.3Z" fill="#1e0208"/>
<path d="M40.9 22Q40.1 26.3 43.2 30.4Q43.8 25.3 40.9 22Z" fill="#30050f"/>
<path d="M37.5 21.4Q35.9 27 39 33.3Q40.4 26.5 37.5 21.4Z" fill="#52091e"/>
<path d="M46.8 21.4Q44.9 25.1 45.3 30Q47.3 25.5 46.8 21.4Z" fill="#1e0208"/>
<path d="M37.8 23.9Q33.9 28.6 34.6 35.9Q38.9 29.9 37.8 23.9Z" fill="#500a1c"/>
<path d="M36.4 23.9Q36.3 27.9 40.5 29.8Q40.3 25.1 36.4 23.9Z" fill="#52091e"/>
<path d="M64.4 23.1Q67 27 72.4 26.7Q69 22.5 64.4 23.1Z" fill="#3e0614"/>
<path d="M39.1 23.9Q38.4 27.9 40.9 31.9Q41.5 27.2 39.1 23.9Z" fill="#24030a"/>
<path d="M57.6 23.5Q56.3 26 58.4 28.6Q59.6 25.5 57.6 23.5Z" fill="#3e0614"/>
<path d="M37.9 25.3Q34.4 29.5 35.9 35.8Q39.6 30.5 37.9 25.3Z" fill="#30050f"/>
<path d="M50.8 20.2Q49.9 25.8 53.9 31.4Q54.5 24.6 50.8 20.2Z" fill="#52091e"/>
<path d="M50.1 19.7Q47.9 22.9 49.1 27.4Q51.4 23.4 50.1 19.7Z" fill="#160205"/>
<path d="M38.1 22.5Q35.6 26.9 38.1 32.3Q40.6 26.9 38.1 22.5Z" fill="#b8184c"/>
<path d="M58 23.1Q58.1 26.5 61.2 28.8Q60.8 24.9 58 23.1Z" fill="#3e0614"/>
<path d="M63.9 23.1Q65.3 26.3 69.2 27.4Q67.3 23.7 63.9 23.1Z" fill="#52091e"/>
<path d="M38.7 25.5Q37.5 29.2 41.1 31.8Q42.1 27.5 38.7 25.5Z" fill="#5e0c24"/>
<path d="M50.4 20.9Q48 26 49.7 32.5Q52.1 26.2 50.4 20.9Z" fill="#1e0208"/>
<path d="M39.3 24.3Q34.6 24.1 31.7 28.6Q37.1 28.4 39.3 24.3Z" fill="#b8184c"/>
<path d="M61.9 21.3Q62.8 25.4 66.9 28.3Q65.5 23.5 61.9 21.3Z" fill="#b8184c"/>
<path d="M46.3 23.7Q45.3 27.6 46.8 32.1Q47.7 27.4 46.3 23.7Z" fill="#30050f"/>
<path d="M64.4 22.4Q66.2 25.5 70.3 25.8Q68 22.4 64.4 22.4Z" fill="#24030a"/>
<path d="M64.3 24.4Q65.7 28.5 70.2 31Q68.2 26.3 64.3 24.4Z" fill="#1e0208"/>
<path d="M37.7 26.1Q33.7 27 32.6 31.6Q37.1 30.1 37.7 26.1Z" fill="#30050f"/>
<path d="M53.3 26.3Q51.3 31.7 52.7 38.5Q54.8 31.9 53.3 26.3Z" fill="#680e28"/>
<path d="M63.5 23.9Q65.6 28.9 71.2 32.2Q68.3 26.4 63.5 23.9Z" fill="#1e0208"/>
<path d="M41.4 24Q37.6 25.1 36.5 29.6Q40.8 27.9 41.4 24Z" fill="#160205"/>
<path d="M54.3 25.9Q52 28.6 53 32.6Q55.4 29.2 54.3 25.9Z" fill="#3e0614"/>
<path d="M37.6 21.7Q34.1 24.4 32.1 29.3Q36.1 25.8 37.6 21.7Z" fill="#3e0614"/>
<path d="M62.8 27.7Q58.5 30.8 57.3 36.9Q62 32.9 62.8 27.7Z" fill="#7e102e"/>
<path d="M62.5 23Q59.9 26.5 62.5 30.9Q65 26.5 62.5 23Z" fill="#24030a"/>
<path d="M62.8 27.4Q58.9 29 58.3 33.8Q62.7 31.6 62.8 27.4Z" fill="#30050f"/>
<path d="M39.4 25Q38.2 28 39.8 31.5Q40.9 27.8 39.4 25Z" fill="#24030a"/>
<path d="M39.8 24.4Q35.6 26.2 32.8 30.9Q37.7 28.5 39.8 24.4Z" fill="#52091e"/>
<path d="M36.6 27.2Q37.8 31.8 42.4 35.3Q40.5 29.9 36.6 27.2Z" fill="#2a040d"/>
<path d="M52 25.3Q49.6 28.6 51.2 33.1Q53.7 29 52 25.3Z" fill="#52091e"/>
<path d="M38.5 26.3Q37.5 30.1 40.5 33.6Q41.3 29.1 38.5 26.3Z" fill="#2a040d"/>
<path d="M63.1 23.7Q60.2 27.4 61.5 32.7Q64.6 28.2 63.1 23.7Z" fill="#961238"/>
<path d="M37.1 23.8Q32.8 25.8 30.8 30.9Q35.7 28.3 37.1 23.8Z" fill="#3e0614"/>
<path d="M40.4 24Q40 27.5 43.1 30.3Q43.2 26.2 40.4 24Z" fill="#b8184c"/>
<path d="M54.1 27.9Q51.1 32.4 52.8 38.6Q56 33 54.1 27.9Z" fill="#52091e"/>
<path d="M65.7 23.6Q65.2 29.5 69.6 35Q69.7 28 65.7 23.6Z" fill="#5e0c24"/>
<path d="M36 27.3Q36.9 31.9 41.4 35.2Q40 29.8 36 27.3Z" fill="#aa1646"/>
<path d="M35.8 27.7Q34.9 31.3 38.1 34.2Q38.8 29.9 35.8 27.7Z" fill="#52091e"/>
<path d="M53 27.9Q52.6 34.1 55.3 41.1Q55.5 33.6 53 27.9Z" fill="#b8184c"/>
<path d="M49.7 28.2Q49.3 32.1 53.1 34.7Q53.2 30.1 49.7 28.2Z" fill="#b8184c"/>
<path d="M56.6 23.9Q58 27.9 62.2 30.6Q60.3 25.9 56.6 23.9Z" fill="#30050f"/>
<path d="M53.6 28.6Q51.5 35 54.6 42.4Q56.5 34.6 53.6 28.6Z" fill="#52091e"/>
<path d="M39 25.7Q39 30.6 43.8 33.7Q43.4 28 39 25.7Z" fill="#b8184c"/>
<path d="M62 25Q61.6 30.9 64.4 37.4Q64.6 30.3 62 25Z" fill="#24030a"/>
<path d="M53.7 27.9Q55.6 32.3 61 34.1Q58.4 29 53.7 27.9Z" fill="#3e0614"/>
<path d="M61.2 27.9Q62 31.6 66.3 33.2Q65 28.9 61.2 27.9Z" fill="#aa1646"/>
<path d="M54.7 27.6Q55.2 31.8 59.9 33.1Q58.9 28.3 54.7 27.6Z" fill="#5e0c24"/>
<path d="M55.2 25.9Q54.2 30.1 56.5 34.8Q57.4 29.7 55.2 25.9Z" fill="#30050f"/>
<path d="M37.5 28.6Q38.3 33.7 43.1 37.5Q41.8 31.5 37.5 28.6Z" fill="#b8184c"/>
<path d="M36.3 26.9Q32.4 28.3 31.7 33.1Q36.1 31 36.3 26.9Z" fill="#160205"/>
<path d="M35 28.1Q35.8 31.7 39.8 33.7Q38.5 29.5 35 28.1Z" fill="#aa1646"/>
<path d="M42.4 29.3Q42.4 32.8 45 36.2Q44.8 32 42.4 29.3Z" fill="#cc1652"/>
<path d="M36.6 25.8Q33.3 26 31.3 29.3Q35.2 28.8 36.6 25.8Z" fill="#3e0614"/>
<path d="M62.1 29.3Q61.4 35 64 41.3Q64.5 34.5 62.1 29.3Z" fill="#ee3c74"/>
<path d="M38.4 26.5Q34.2 27.3 33.3 32.1Q38 30.7 38.4 26.5Z" fill="#3e0614"/>
<path d="M62.3 29.1Q60.9 33.6 63 38.7Q64.4 33.3 62.3 29.1Z" fill="#1e0208"/>
<path d="M42.9 28.5Q38.1 29.9 36.6 35.5Q42 33.4 42.9 28.5Z" fill="#961238"/>
<path d="M54.4 29.2Q50.7 32.8 51.8 38.6Q55.7 34.1 54.4 29.2Z" fill="#aa1646"/>
<path d="M38.4 25.1Q38.8 29.8 43.9 32Q42.9 26.5 38.4 25.1Z" fill="#24030a"/>
<path d="M57.8 25Q55.8 27.6 56.8 31.3Q59 28.1 57.8 25Z" fill="#500a1c"/>
<path d="M60 30.2Q61.3 33.7 65.5 35Q63.7 31 60 30.2Z" fill="#30050f"/>
<path d="M61.3 28.9Q61.4 34.1 65.5 38.7Q65.1 32.5 61.3 28.9Z" fill="#680e28"/>
<path d="M46.4 25.8Q43.6 26.7 43.8 30.1Q46.9 28.7 46.4 25.8Z" fill="#3e0614"/>
<path d="M52.1 30.6Q48.8 32.9 48 37.6Q51.7 34.6 52.1 30.6Z" fill="#30050f"/>
<path d="M46.8 27.9Q45.7 32.7 48.8 37.7Q49.8 31.9 46.8 27.9Z" fill="#3e0614"/>
<path d="M52.4 30Q54.3 34.2 59.2 36.9Q56.6 32 52.4 30Z" fill="#5e0c24"/>
<path d="M42.1 28Q39 31.7 38.6 37.5Q42.1 32.9 42.1 28Z" fill="#52091e"/>
<path d="M63.7 26.1Q63.5 29.2 66.5 31.3Q66.4 27.7 63.7 26.1Z" fill="#24030a"/>
<path d="M51.8 30.4Q48.1 33.5 48.8 39.1Q52.9 35.2 51.8 30.4Z" fill="#680e28"/>
<path d="M38.8 27Q39.1 31 43.4 33.1Q42.6 28.5 38.8 27Z" fill="#680e28"/>
<path d="M53.5 27.9Q51.5 32.1 52.7 37.4Q54.8 32.3 53.5 27.9Z" fill="#e42a66"/>
<path d="M61 27.4Q59.8 31.1 61.6 35.5Q62.7 30.9 61 27.4Z" fill="#680e28"/>
<path d="M62.5 28.2Q59.4 29.4 58.6 33.2Q62.1 31.5 62.5 28.2Z" fill="#52091e"/>
<path d="M54.9 27.4Q50.9 29.1 48.7 33.7Q53.3 31.4 54.9 27.4Z" fill="#160205"/>
<path d="M52.1 27.7Q47.7 30.4 45.8 36.3Q50.8 32.7 52.1 27.7Z" fill="#f24c82"/>
<path d="M37.9 26.8Q34.2 30.4 34.1 36.5Q38.1 31.9 37.9 26.8Z" fill="#d41a54"/>
<path d="M37.8 28.2Q37.8 32.3 41.4 35.3Q41.1 30.6 37.8 28.2Z" fill="#30050f"/>
<path d="M36.8 26.9Q32.7 28.1 31.7 32.9Q36.3 31.1 36.8 26.9Z" fill="#680e28"/>
<path d="M35.6 27Q36.4 32.3 41.5 36Q40.2 29.8 35.6 27Z" fill="#52091e"/>
<path d="M63.9 29.1Q63.6 35.3 67.9 41.2Q67.8 33.9 63.9 29.1Z" fill="#7e102e"/>
<path d="M64.5 28.8Q63.6 33.1 66.9 37Q67.6 31.9 64.5 28.8Z" fill="#680e28"/>
<path d="M49.7 31.6Q50.2 36.4 54.3 40.4Q53.4 34.8 49.7 31.6Z" fill="#52091e"/>
<path d="M63.7 28.1Q60.9 30.7 61.3 35.2Q64.3 31.9 63.7 28.1Z" fill="#5e0c24"/>
<path d="M62.4 29.3Q61.4 33.5 65.4 36.4Q66.1 31.5 62.4 29.3Z" fill="#b8184c"/>
<path d="M37.3 27.9Q33.1 31.7 30.9 38.3Q35.8 33.4 37.3 27.9Z" fill="#1e0208"/>
<path d="M59.4 30.2Q60.8 34.7 65.9 36.8Q63.8 31.7 59.4 30.2Z" fill="#1e0208"/>
<path d="M41.9 32Q42.1 36.4 46.3 39.7Q45.6 34.5 41.9 32Z" fill="#1e0208"/>
<path d="M43.4 32.1Q39.1 36.1 39.2 43.1Q43.9 38 43.4 32.1Z" fill="#e02664"/>
<path d="M53.2 28.4Q52.1 32.8 56.1 36.3Q56.9 31.1 53.2 28.4Z" fill="#b8184c"/>
<path d="M64 32.3Q61.6 35.1 61.7 39.4Q64.3 35.9 64 32.3Z" fill="#30050f"/>
<path d="M49.9 28.4Q48.2 32.9 50.7 37.9Q52.3 32.6 49.9 28.4Z" fill="#160205"/>
<path d="M44.3 30.4Q41.6 33.3 42.6 37.9Q45.5 34.2 44.3 30.4Z" fill="#52091e"/>
<path d="M63.4 29.3Q65 32.6 69.2 33.5Q67 29.8 63.4 29.3Z" fill="#30050f"/>
<path d="M43.6 30.9Q39 32.9 36.4 38.1Q41.7 35.5 43.6 30.9Z" fill="#1e0208"/>
<path d="M54.5 29.3Q52.3 33.9 54.4 39.6Q56.6 33.9 54.5 29.3Z" fill="#30050f"/>
<path d="M43.6 31.4Q40 33.4 40.2 38.2Q44.2 35.5 43.6 31.4Z" fill="#f24c82"/>
<path d="M42.3 31.6Q38.4 36 37.6 42.9Q42 37.4 42.3 31.6Z" fill="#cc1652"/>
<path d="M41.9 32.9Q40.5 36.6 43 40.4Q44.3 36 41.9 32.9Z" fill="#f0447c"/>
<path d="M61.9 29.5Q60.8 34.1 64.8 37.9Q65.6 32.4 61.9 29.5Z" fill="#30050f"/>
<path d="M37.4 32.4Q33.3 33.8 31.7 38.6Q36.3 36.6 37.4 32.4Z" fill="#dc205c"/>
<path d="M41.3 32.9Q37.1 35.5 35.2 41.2Q40.1 37.8 41.3 32.9Z" fill="#b8184c"/>
<path d="M68 35.6Q64.2 36 61.9 39.9Q66.3 39 68 35.6Z" fill="#f65c90"/>
<path d="M55 30.5Q53 34.3 54.1 39.3Q56.1 34.6 55 30.5Z" fill="#5e0c24"/>
<path d="M67.6 35.5Q68.2 39.4 72.5 41.2Q71.3 36.7 67.6 35.5Z" fill="#7e102e"/>
<path d="M61 34Q63.5 37.4 68.5 38.2Q65.3 34.4 61 34Z" fill="#aa1646"/>
<path d="M43.6 31.8Q42.2 35.6 44.5 39.8Q45.7 35.2 43.6 31.8Z" fill="#52091e"/>
<path d="M42.7 32.4Q38.1 32.6 35.5 37.3Q40.8 36.6 42.7 32.4Z" fill="#f65c90"/>
<path d="M47.1 32.9Q43.8 35.2 41.9 39.7Q45.7 36.7 47.1 32.9Z" fill="#30050f"/>
<path d="M43 31.3Q42.1 35.5 45.7 39.1Q46.2 34.1 43 31.3Z" fill="#aa1646"/>
<path d="M52 32.3Q51.5 35.2 54.5 36.9Q54.8 33.4 52 32.3Z" fill="#30050f"/>
<path d="M59.4 37Q61.7 41.1 66.9 43Q63.9 38.3 59.4 37Z" fill="#5e0c24"/>
<path d="M43.3 31.5Q43.2 35 46.9 36.3Q46.7 32.4 43.3 31.5Z" fill="#b8184c"/>
<path d="M59.5 36.7Q56.9 39.7 57.4 44.5Q60.2 40.6 59.5 36.7Z" fill="#e8326c"/>
<path d="M59.2 37Q55 40.6 54.8 47.2Q59.5 42.5 59.2 37Z" fill="#f24c82"/>
<path d="M39.9 35.4Q38.6 38.1 40.8 40.8Q42 37.5 39.9 35.4Z" fill="#f65c90"/>
<path d="M58.9 37.1Q56.5 41.9 59.4 47.5Q61.8 41.7 58.9 37.1Z" fill="#aa1646"/>
<path d="M30.1 34.2Q30.7 39.4 35.7 43Q34.6 36.9 30.1 34.2Z" fill="#961238"/>
<path d="M44 32.7Q40.8 35.5 41.7 40.4Q45.1 36.8 44 32.7Z" fill="#7e102e"/>
<path d="M58.8 34.7Q54.9 36.7 53.5 41.7Q57.9 39 58.8 34.7Z" fill="#f65c90"/>
<path d="M41.7 37.8Q38.2 39 36.8 43.2Q40.8 41.4 41.7 37.8Z" fill="#f65c90"/>
<path d="M30.2 36.7Q25.4 37.9 23.9 43.4Q29.3 41.5 30.2 36.7Z" fill="#cc1652"/>
<path d="M29.9 38Q25.1 37.7 21.7 42.2Q27.3 42 29.9 38Z" fill="#dc205c"/>
<path d="M42.8 34.6Q41.2 39.6 43.3 45.6Q44.8 39.4 42.8 34.6Z" fill="#b8184c"/>
<path d="M58.4 35.3Q57.2 39.6 61 43.2Q61.9 38.1 58.4 35.3Z" fill="#52091e"/>
<path d="M29.7 37Q24.7 37.2 21 41.7Q26.8 41 29.7 37Z" fill="#e8326c"/>
<path d="M59.6 37.9Q56.1 40.2 55.8 45Q59.7 42.1 59.6 37.9Z" fill="#f65c90"/>
<path d="M31.6 36.7Q27.9 39.2 26.4 44.4Q30.6 41 31.6 36.7Z" fill="#e42a66"/>
<path d="M67.8 38.1Q70.3 41.5 75 40.3Q71.8 36.7 67.8 38.1Z" fill="#7e102e"/>
<path d="M30.7 35.9Q25.7 36.3 23.4 41.6Q29.1 40.6 30.7 35.9Z" fill="#ee3c74"/>
<path d="M29.4 36.8Q27.4 41.3 28.8 47Q30.8 41.5 29.4 36.8Z" fill="#d41a54"/>
<path d="M59.6 37.6Q59 43.1 63.6 47.8Q63.8 41.3 59.6 37.6Z" fill="#e8326c"/>
<path d="M29.5 37.6Q25.3 41.6 24 48.6Q28.8 43.4 29.5 37.6Z" fill="#e8326c"/>
<path d="M58.8 38.5Q57.9 43.6 60.2 49.5Q61 43.2 58.8 38.5Z" fill="#e02664"/>
<path d="M30.7 38.6Q27.4 40 26.2 44.1Q30 42.2 30.7 38.6Z" fill="#f24c82"/>
<path d="M29.5 37.1Q28.1 42.5 30.4 48.9Q31.6 42.2 29.5 37.1Z" fill="#f24c82"/>
<path d="M60.1 35.9Q61.2 40.2 66 41.9Q64.4 37 60.1 35.9Z" fill="#e8326c"/>
<path d="M49.8 37.1Q51.1 41 55.8 41.6Q53.9 37.2 49.8 37.1Z" fill="#680e28"/>
<path d="M29.1 38.4Q28.7 42.9 32.4 46.8Q32.5 41.4 29.1 38.4Z" fill="#e8326c"/>
<path d="M59.5 34.9Q58.1 41 60.2 48.1Q61.6 40.8 59.5 34.9Z" fill="#ee3c74"/>
<path d="M42.7 37.8Q43.1 42.2 47 45.7Q46.2 40.5 42.7 37.8Z" fill="#dc205c"/>
<path d="M67.6 38.6Q64.5 41.1 65.7 45.5Q69 42.3 67.6 38.6Z" fill="#dc205c"/>
<path d="M48.3 39.1Q46.9 44 50.8 48.4Q52 42.6 48.3 39.1Z" fill="#e42a66"/>
<path d="M69.6 40.3Q65.5 43.5 65.4 49.7Q69.9 45.5 69.6 40.3Z" fill="#e8326c"/>
<path d="M49.3 38.1Q47.2 43.9 49 51Q51.2 44 49.3 38.1Z" fill="#e8326c"/>
<path d="M57.8 37.8Q56 42.4 57.3 48.2Q59.1 42.6 57.8 37.8Z" fill="#e02664"/>
<path d="M60.4 35.1Q56.2 36.4 55.8 41.4Q60.4 39.5 60.4 35.1Z" fill="#52091e"/>
<path d="M48 37.3Q43.6 40.4 42.2 46.6Q47.2 42.5 48 37.3Z" fill="#f65c90"/>
<path d="M40 38.5Q40.2 42 43.8 43.8Q43.1 39.8 40 38.5Z" fill="#500a1c"/>
<path d="M42.4 39.8Q38.7 39.9 37.8 44Q42 43.5 42.4 39.8Z" fill="#ee3c74"/>
<path d="M70 38.1Q67.5 40.7 68.4 44.9Q71.1 41.5 70 38.1Z" fill="#f24c82"/>
<path d="M42.7 37.9Q41.3 42.8 44.3 48Q45.6 42.1 42.7 37.9Z" fill="#f0447c"/>
<path d="M67.5 37Q69.9 40.3 74.5 39.1Q71.4 35.6 67.5 37Z" fill="#d41a54"/>
<path d="M45.5 39.7Q41.6 40.8 39.1 44.9Q43.6 43.2 45.5 39.7Z" fill="#f0447c"/>
<path d="M40.8 37Q37 37.9 34.6 41.8Q39 40.4 40.8 37Z" fill="#e02664"/>
<path d="M31.1 37.5Q27.2 39.6 25.7 44.5Q30 41.7 31.1 37.5Z" fill="#500a1c"/>
<path d="M66.4 38.5Q65.8 42.2 69.1 45.1Q69.4 40.7 66.4 38.5Z" fill="#d41a54"/>
<path d="M47 37Q43.9 39.4 42.7 44Q46.3 40.9 47 37Z" fill="#dc205c"/>
<path d="M68 38.2Q67 42.5 70.6 46.2Q71.3 41.1 68 38.2Z" fill="#d41a54"/>
<path d="M67.9 39.9Q65.7 43.7 66.6 48.8Q69 44.2 67.9 39.9Z" fill="#f65c90"/>
<path d="M48.9 38.3Q49.3 43.1 54.4 45.6Q53.4 40 48.9 38.3Z" fill="#f24c82"/>
<path d="M30.6 36.5Q27.1 40.3 26.3 46.4Q30.2 41.6 30.6 36.5Z" fill="#ee3c74"/>
<path d="M59.6 36.9Q57.8 41.1 61.1 45.1Q62.8 40.2 59.6 36.9Z" fill="#ee3c74"/>
<path d="M30.5 37.7Q28.4 41.2 30.4 45.6Q32.5 41.2 30.5 37.7Z" fill="#30050f"/>
<path d="M61.6 40.7Q61 44.7 63.5 48.8Q63.9 44 61.6 40.7Z" fill="#f65c90"/>
<path d="M67.7 38.4Q64.3 41.3 63.7 46.5Q67.5 42.9 67.7 38.4Z" fill="#f65c90"/>
<path d="M47.3 37Q43.8 40.8 44.7 46.9Q48.5 42.1 47.3 37Z" fill="#f0447c"/>
<path d="M48.8 40.5Q49.3 44.3 53.5 44.6Q52.6 40.5 48.8 40.5Z" fill="#dc205c"/>
<path d="M42.1 40.6Q39.7 46.3 42.2 53.3Q44.6 46.3 42.1 40.6Z" fill="#e8326c"/>
<path d="M33 40.9Q29.9 42.8 30.2 47Q33.6 44.5 33 40.9Z" fill="#5e0c24"/>
<path d="M43.3 39Q41.8 43.2 45.5 46.9Q46.7 41.9 43.3 39Z" fill="#ee3c74"/>
<path d="M49.1 37.9Q45.7 39.2 45.2 43.5Q49 41.5 49.1 37.9Z" fill="#f65c90"/>
<path d="M47.2 40Q44.5 45.3 46.7 51.9Q49.4 45.5 47.2 40Z" fill="#f24c82"/>
<path d="M59.6 36.6Q62.1 40.9 68 41.5Q64.6 36.7 59.6 36.6Z" fill="#cc1652"/>
<path d="M50 39.3Q45.9 41.5 44.2 46.7Q48.8 43.8 50 39.3Z" fill="#e8326c"/>
<path d="M43.8 37.6Q42.3 42.2 45.6 46.8Q46.9 41.3 43.8 37.6Z" fill="#dc205c"/>
<path d="M69.5 38.4Q67.9 42.4 69.2 47.5Q70.9 42.5 69.5 38.4Z" fill="#30050f"/>
<path d="M67.9 40.4Q71.4 43.9 77.4 44.6Q72.9 40.7 67.9 40.4Z" fill="#cc1652"/>
<path d="M48.1 37.3Q47 41.4 49.1 45.9Q50 41 48.1 37.3Z" fill="#ee3c74"/>
<path d="M47.9 39.9Q43.6 42.5 43 48.4Q47.9 45 47.9 39.9Z" fill="#e02664"/>
<path d="M41.6 39.6Q42.2 42.9 45.6 44.9Q44.6 41.1 41.6 39.6Z" fill="#ee3c74"/>
<path d="M39.6 38.5Q35.4 42.3 34.6 49Q39.3 44.1 39.6 38.5Z" fill="#cc1652"/>
<path d="M44.8 38.3Q40.4 40.9 38.5 46.6Q43.5 43.2 44.8 38.3Z" fill="#b8184c"/>
<path d="M68.6 39.2Q67 44.1 69.1 49.9Q70.7 44 68.6 39.2Z" fill="#f24c82"/>
<path d="M67.9 38.4Q68.2 44.8 72.6 51.1Q71.8 43.5 67.9 38.4Z" fill="#f24c82"/>
<path d="M48.4 38.6Q44.2 42.3 43.1 48.9Q47.9 44.2 48.4 38.6Z" fill="#dc205c"/>
<path d="M39.9 38.4Q36.1 42.9 36.4 49.9Q40.6 44.2 39.9 38.4Z" fill="#e02664"/>
<path d="M29.5 38.4Q28.9 43.6 32.6 48.6Q32.9 42.3 29.5 38.4Z" fill="#e02664"/>
<path d="M65.5 40.6Q66.5 43.7 70 45.3Q68.6 41.7 65.5 40.6Z" fill="#e42a66"/>
<path d="M67.9 40.5Q66.9 44.5 69.9 48.4Q70.8 43.6 67.9 40.5Z" fill="#e42a66"/>
<path d="M41.3 39.1Q40.1 44.2 43 49.8Q44 43.6 41.3 39.1Z" fill="#f65c90"/>
<path d="M70.6 41.6Q71.6 44.8 75.4 46Q73.9 42.3 70.6 41.6Z" fill="#680e28"/>
<path d="M71.3 45Q71 49.3 74.8 52.7Q74.7 47.6 71.3 45Z" fill="#dc205c"/>
<path d="M66.8 39.2Q64.2 41.5 64.7 45.6Q67.5 42.6 66.8 39.2Z" fill="#d41a54"/>
<path d="M44.2 40.5Q40.5 43.7 41.4 49.4Q45.4 45.2 44.2 40.5Z" fill="#d41a54"/>
<path d="M47.9 44.3Q47.8 47.4 50.8 49.2Q50.6 45.7 47.9 44.3Z" fill="#e42a66"/>
<path d="M44.5 44.8Q43.9 49 47 53Q47.4 47.9 44.5 44.8Z" fill="#dc205c"/>
<path d="M68.4 41.4Q64.4 43.4 64 48.6Q68.4 45.9 68.4 41.4Z" fill="#e42a66"/>
<path d="M48.8 40Q47.7 45.8 51.7 51.7Q52.5 44.6 48.8 40Z" fill="#ee3c74"/>
<path d="M68.9 42.8Q67.9 47.8 71.6 52.6Q72.3 46.6 68.9 42.8Z" fill="#ee3c74"/>
<path d="M39.2 46Q35.8 49.7 36.5 55.5Q40.2 50.9 39.2 46Z" fill="#e02664"/>
<path d="M42.8 46.1Q43.1 49.8 47.1 51.2Q46.4 47 42.8 46.1Z" fill="#e42a66"/>
<path d="M54.3 45.6Q53.8 50.7 57.3 55.8Q57.5 49.6 54.3 45.6Z" fill="#ee3c74"/>
<path d="M43.7 46.4Q44.2 49.8 48.1 50.7Q47.1 46.8 43.7 46.4Z" fill="#ee3c74"/>
<path d="M55.9 46.9Q57.3 51.1 61.8 54.2Q59.8 49.1 55.9 46.9Z" fill="#d41a54"/>
<path d="M64.9 47Q66.3 50.3 70.3 49.4Q68.3 45.9 64.9 47Z" fill="#ee3c74"/>
<path d="M37 47.2Q33 49.1 33.3 54.2Q37.6 51.6 37 47.2Z" fill="#f65c90"/>
<path d="M63.7 46.7Q61.8 50.1 63.9 54.3Q65.7 50 63.7 46.7Z" fill="#e02664"/>
<path d="M75.2 45.2Q71.5 47.1 71.3 51.9Q75.4 49.4 75.2 45.2Z" fill="#d41a54"/>
<path d="M55.2 46.9Q50.2 48.8 48.5 54.9Q54.2 52.1 55.2 46.9Z" fill="#ee3c74"/>
<path d="M27.6 47Q28.9 49.3 32 49.8Q30.2 47.2 27.6 47Z" fill="#ee3c74"/>
<path d="M38.6 47.2Q35.3 51.2 35.4 57.3Q39.1 52.4 38.6 47.2Z" fill="#cc1652"/>
<path d="M37.5 45.2Q33.5 49 31.8 55.3Q36.2 50.5 37.5 45.2Z" fill="#ee3c74"/>
<path d="M45.1 47.1Q41.7 48.1 40.3 51.9Q44.2 50.5 45.1 47.1Z" fill="#dc205c"/>
<path d="M38.7 45.7Q34.3 48.8 32.6 55Q37.7 51 38.7 45.7Z" fill="#dc205c"/>
<path d="M57.1 46.7Q58.3 50.7 62.9 52.8Q61.1 48.1 57.1 46.7Z" fill="#d41a54"/>
<path d="M74.2 47.6Q77.8 50.9 83.7 51.1Q79.1 47.5 74.2 47.6Z" fill="#e8326c"/>
<path d="M31.6 46Q27.5 46.8 24.4 50.6Q29.2 49.3 31.6 46Z" fill="#e8326c"/>
<path d="M74.7 45.2Q74.7 50.1 78 55Q77.7 49.1 74.7 45.2Z" fill="#e42a66"/>
<path d="M63.1 46.9Q63 53.2 67.7 59.1Q67.5 51.5 63.1 46.9Z" fill="#e8326c"/>
<path d="M54.5 47.8Q50.1 51.2 49.9 57.8Q54.9 53.4 54.5 47.8Z" fill="#ee3c74"/>
<path d="M62 47.1Q60.5 52.8 64.5 58.5Q65.7 51.7 62 47.1Z" fill="#dc205c"/>
<path d="M31.7 46.7Q27.6 45.6 24.9 49.7Q29.7 50.5 31.7 46.7Z" fill="#e42a66"/>
<path d="M57.4 47.4Q54.1 50.4 53.7 55.6Q57.3 51.8 57.4 47.4Z" fill="#cc1652"/>
<path d="M72.2 47Q70.7 51 72.7 55.6Q74.1 50.8 72.2 47Z" fill="#dc205c"/>
<path d="M36.6 48Q32.7 49.2 32.5 53.9Q36.8 52 36.6 48Z" fill="#f0447c"/>
<path d="M30.7 47.1Q26.5 48.7 24.8 53.6Q29.5 51.4 30.7 47.1Z" fill="#f65c90"/>
<path d="M31 46.8Q28.4 48.8 27.5 52.7Q30.6 50.1 31 46.8Z" fill="#e8326c"/>
<path d="M45.2 47.8Q44.4 53.8 48.6 59.6Q49.1 52.4 45.2 47.8Z" fill="#f0447c"/>
<path d="M36.9 45.6Q32.5 46.6 29 50.7Q34.2 49.2 36.9 45.6Z" fill="#e42a66"/>
<path d="M38.2 45.4Q40.1 49.6 45 52.4Q42.4 47.4 38.2 45.4Z" fill="#e02664"/>
<path d="M42.5 46.2Q37.5 48.4 35.8 54.5Q41.5 51.5 42.5 46.2Z" fill="#ee3c74"/>
<path d="M61.8 46.7Q64.1 50.3 69 50.5Q66 46.6 61.8 46.7Z" fill="#f0447c"/>
<path d="M29.3 48Q25.7 46.7 23.3 50.3Q27.5 51.4 29.3 48Z" fill="#ee3c74"/>
<path d="M54.7 48.2Q50.9 49.9 50.4 54.7Q54.6 52.4 54.7 48.2Z" fill="#f0447c"/>
<path d="M52.4 47Q54.8 50.5 59.7 51.7Q56.6 47.7 52.4 47Z" fill="#e02664"/>
<path d="M61.8 46Q58 48.7 57.1 54.1Q61.3 50.6 61.8 46Z" fill="#f0447c"/>
<path d="M31 47.4Q28.7 51.7 30.5 57.1Q32.9 51.9 31 47.4Z" fill="#f65c90"/>
<path d="M36.9 49.4Q35 53.1 36.4 57.8Q38.3 53.3 36.9 49.4Z" fill="#d41a54"/>
<path d="M36.4 47.1Q32.3 51.2 32 58.2Q36.6 52.9 36.4 47.1Z" fill="#ee3c74"/>
<path d="M29.3 49.7Q28.3 53.2 30.9 56.6Q31.7 52.4 29.3 49.7Z" fill="#e8326c"/>
<path d="M37.3 46.9Q36.2 49.3 37.9 51.8Q39 48.9 37.3 46.9Z" fill="#f0447c"/>
<path d="M29.2 48.9Q26.5 52.3 28.4 57Q31.1 52.8 29.2 48.9Z" fill="#f24c82"/>
<path d="M38.4 46.7Q39 50.7 43.5 51.9Q42.4 47.4 38.4 46.7Z" fill="#f65c90"/>
<path d="M63.4 47.5Q61.1 53.1 64.1 59.7Q66.4 52.8 63.4 47.5Z" fill="#dc205c"/>
<path d="M36.8 46.3Q36.1 51 40.4 54.4Q40.8 48.9 36.8 46.3Z" fill="#e8326c"/>
<path d="M59.9 47.3Q60.9 52.4 65.9 56.2Q64.2 50.2 59.9 47.3Z" fill="#e8326c"/>
<path d="M68 46.1Q69.9 49.9 74.6 51.9Q72 47.5 68 46.1Z" fill="#e02664"/>
<path d="M56.1 48.1Q57.4 53.7 62.2 58.5Q60.3 51.9 56.1 48.1Z" fill="#e02664"/>
<path d="M27.7 49.1Q24 49.2 21.3 52.6Q25.6 52.1 27.7 49.1Z" fill="#e02664"/>
<path d="M61.4 47.6Q59.6 52.4 63 57.2Q64.7 51.5 61.4 47.6Z" fill="#ee3c74"/>
<path d="M75.6 49.5Q75.6 54.5 79.6 58.7Q79.3 52.9 75.6 49.5Z" fill="#ee3c74"/>
<path d="M45.2 47Q41.4 48.5 40.4 53.2Q44.7 51.1 45.2 47Z" fill="#e8326c"/>
<path d="M53.7 49.7Q50 52 48.2 56.9Q52.4 53.9 53.7 49.7Z" fill="#f0447c"/>
<path d="M63 47.5Q59.1 49.5 58.1 54.5Q62.4 51.8 63 47.5Z" fill="#e8326c"/>
<path d="M36.8 47Q35.8 51 39.3 54.3Q40 49.6 36.8 47Z" fill="#ee3c74"/>
<path d="M39.7 47Q36.3 48.9 34.8 53.3Q38.7 50.8 39.7 47Z" fill="#f24c82"/>
<path d="M28.7 48.1Q26.6 51.6 27.5 56.5Q29.8 52.1 28.7 48.1Z" fill="#f65c90"/>
<path d="M45.8 46.9Q47.3 52 52.1 56.2Q50 50.2 45.8 46.9Z" fill="#f24c82"/>
<path d="M70.2 46.7Q66.8 51.2 68 57.8Q71.6 52.2 70.2 46.7Z" fill="#e42a66"/>
<path d="M46.4 47.4Q43 48.9 41.8 53.2Q45.7 51 46.4 47.4Z" fill="#f24c82"/>
<path d="M71 47.4Q68 51.5 70.4 57Q73.4 51.9 71 47.4Z" fill="#e42a66"/>
<path d="M73.4 48Q69.6 51 69 56.8Q73.3 52.9 73.4 48Z" fill="#ee3c74"/>
<path d="M62.5 47.9Q62.7 52.4 67.3 54.9Q66.7 49.7 62.5 47.9Z" fill="#f65c90"/>
<path d="M60 48.4Q58.5 51.4 59.4 55.2Q61 51.6 60 48.4Z" fill="#e42a66"/>
<path d="M72.5 46.2Q73.1 51 77.6 54.7Q76.5 49 72.5 46.2Z" fill="#d41a54"/>
<path d="M37.2 47.2Q35.8 51.3 38.9 55.4Q40.1 50.5 37.2 47.2Z" fill="#e8326c"/>
<path d="M22.5 51.2Q21.7 55.4 24.3 59.7Q25 54.7 22.5 51.2Z" fill="#cc1652"/>
<path d="M72.6 49.9Q74.1 55.2 79.7 58.4Q77.5 52.3 72.6 49.9Z" fill="#ee3c74"/>
<path d="M73.4 47.2Q75.9 51.4 81.5 51.2Q78.2 46.6 73.4 47.2Z" fill="#f65c90"/>
<path d="M61.8 48.2Q59 50.3 59.5 54.4Q62.5 51.7 61.8 48.2Z" fill="#cc1652"/>
<path d="M55.3 47.6Q53.5 52.2 56.8 56.8Q58.5 51.3 55.3 47.6Z" fill="#d41a54"/>
<path d="M55.3 47Q54 51.2 57.3 55.3Q58.5 50.2 55.3 47Z" fill="#f65c90"/>
<path d="M44.2 49.2Q42.7 55.4 44.3 62.8Q45.8 55.3 44.2 49.2Z" fill="#e42a66"/>
<path d="M50.1 46.1Q50.5 50.6 55.3 52.7Q54.4 47.5 50.1 46.1Z" fill="#cc1652"/>
<path d="M61.5 46.2Q56.8 48.1 55.9 53.9Q61.1 51.2 61.5 46.2Z" fill="#f65c90"/>
<path d="M60.8 49.9Q60.5 54.1 64.6 56.6Q64.5 51.8 60.8 49.9Z" fill="#f65c90"/>
<path d="M45 49.8Q42 52.6 41.7 57.5Q45.1 53.9 45 49.8Z" fill="#cc1652"/>
<path d="M43.5 51.8Q39.4 53.9 38.5 59.2Q43 56.3 43.5 51.8Z" fill="#cc1652"/>
<path d="M73 47.3Q70.6 52.6 73.2 58.9Q75.6 52.5 73 47.3Z" fill="#d41a54"/>
<path d="M44.7 46.8Q42.4 51.8 43 58.3Q45.5 52.2 44.7 46.8Z" fill="#d41a54"/>
<path d="M30.5 49.7Q27.3 52.9 28.1 58.2Q31.5 54.1 30.5 49.7Z" fill="#dc205c"/>
<path d="M54.7 46.3Q54.1 52.4 58.6 58Q58.7 50.8 54.7 46.3Z" fill="#d41a54"/>
<path d="M44.2 46.5Q41.9 50.5 45 54.9Q47.3 50 44.2 46.5Z" fill="#e42a66"/>
<path d="M32.5 47.9Q33.4 51.8 37.5 54.3Q36 49.8 32.5 47.9Z" fill="#f24c82"/>
<path d="M24.2 51.1Q22.5 55.6 24.7 61Q26.4 55.4 24.2 51.1Z" fill="#f65c90"/>
<path d="M61.2 47.6Q63.6 51.7 69.1 52.1Q65.9 47.6 61.2 47.6Z" fill="#d41a54"/>
<path d="M32.2 49.3Q30 51.8 31.5 55.2Q33.7 52.2 32.2 49.3Z" fill="#f65c90"/>
<path d="M72.1 49.7Q69.9 54.7 70.6 61.3Q73 55.1 72.1 49.7Z" fill="#e42a66"/>
<path d="M75.2 51.4Q72.7 54.8 74.1 59.5Q76.7 55.3 75.2 51.4Z" fill="#dc205c"/>
<path d="M55.3 49.7Q54.1 55.2 58.1 60.5Q59 53.9 55.3 49.7Z" fill="#f65c90"/>
<path d="M61.7 48.3Q62.7 53.8 68.5 57.3Q66.7 50.9 61.7 48.3Z" fill="#f24c82"/>
<path d="M29.6 51.9Q26.2 57.4 27.4 65.1Q31 58.2 29.6 51.9Z" fill="#cc1652"/>
<path d="M46.8 49.4Q45.9 53.4 49.1 57.1Q49.8 52.3 46.8 49.4Z" fill="#f0447c"/>
<path d="M45.5 47.5Q42 50.8 41.3 56.6Q45.3 52.4 45.5 47.5Z" fill="#ee3c74"/>
<path d="M58.6 48.7Q60 52.9 64.8 55Q62.8 50.1 58.6 48.7Z" fill="#f65c90"/>
<path d="M21.7 50.9Q17.9 50.4 16.1 54.3Q20.4 54.5 21.7 50.9Z" fill="#cc1652"/>
<path d="M24.8 49.7Q22.6 53.2 24.3 57.9Q26.5 53.5 24.8 49.7Z" fill="#e42a66"/>
<path d="M61.9 51.5Q61.7 55.3 64.6 58.7Q64.6 54.2 61.9 51.5Z" fill="#f24c82"/>
<path d="M44.8 48.7Q41.9 52.9 43.6 58.6Q46.6 53.4 44.8 48.7Z" fill="#cc1652"/>
<path d="M58.7 51.5Q55 52.8 53.3 57.1Q57.6 55.3 58.7 51.5Z" fill="#f0447c"/>
<path d="M46.5 52.8Q47.6 56.1 51.5 57.2Q49.9 53.5 46.5 52.8Z" fill="#ee3c74"/>
<path d="M53.6 49.1Q55 54.5 59.8 59.1Q57.8 52.8 53.6 49.1Z" fill="#e8326c"/>
<path d="M32.4 51.2Q32.5 54.8 35.9 57.3Q35.5 53.1 32.4 51.2Z" fill="#e02664"/>
<path d="M24.1 52.1Q22.8 57.4 25 63.5Q26.2 57.1 24.1 52.1Z" fill="#f65c90"/>
<path d="M33.7 53.1Q32.7 58.4 36.3 63.6Q37.2 57.3 33.7 53.1Z" fill="#e8326c"/>
<path d="M71.8 47.7Q73.5 51.4 78.1 52.9Q75.7 48.7 71.8 47.7Z" fill="#e42a66"/>
<path d="M30.9 48.8Q26 48.1 21.7 52.2Q27.6 52.5 30.9 48.8Z" fill="#e02664"/>
<path d="M30.3 49.2Q26.3 49.3 23.8 53.3Q28.6 52.9 30.3 49.2Z" fill="#dc205c"/>
<path d="M28.8 48.7Q29.8 52.7 33.9 55.3Q32.5 50.6 28.8 48.7Z" fill="#dc205c"/>
<path d="M33.4 52.5Q28.7 56.5 27.2 63.7Q32.5 58.6 33.4 52.5Z" fill="#cc1652"/>
<path d="M33.2 52.3Q28.5 54.6 26.9 60.6Q32.2 57.4 33.2 52.3Z" fill="#f24c82"/>
<path d="M24.6 51.2Q22.3 56.2 24.9 62.3Q27.1 56.1 24.6 51.2Z" fill="#f0447c"/>
<path d="M71.3 48.3Q73.3 51.2 77.4 50.6Q74.8 47.5 71.3 48.3Z" fill="#f0447c"/>
<path d="M77.8 48.9Q78 54.5 83.3 58.6Q82.5 51.9 77.8 48.9Z" fill="#d41a54"/>
<path d="M76.1 51.9Q73 54.1 73.2 58.5Q76.6 55.7 76.1 51.9Z" fill="#f65c90"/>
<path d="M23.9 49.6Q20 52.4 19.4 58Q23.7 54.4 23.9 49.6Z" fill="#e42a66"/>
<path d="M22.7 53.2Q21.8 57.3 24.7 61.3Q25.4 56.4 22.7 53.2Z" fill="#f65c90"/>
<path d="M23.6 52.4Q22.8 56.5 27 58.9Q27.4 54.1 23.6 52.4Z" fill="#e02664"/>
<path d="M77.3 52.7Q79.7 55.1 83.6 54.8Q80.6 52.2 77.3 52.7Z" fill="#dc205c"/>
<path d="M73.9 49.5Q76.7 54.6 83.2 56.9Q79.5 51.1 73.9 49.5Z" fill="#f65c90"/>
<path d="M22.7 50.3Q23.1 54.9 27.3 58.3Q26.5 52.9 22.7 50.3Z" fill="#cc1652"/>
<path d="M42.7 51.3Q44.4 55.3 49.1 57.7Q46.8 53 42.7 51.3Z" fill="#e8326c"/>
<path d="M42.5 52.2Q38.3 52.3 37.1 56.9Q41.8 56.3 42.5 52.2Z" fill="#f0447c"/>
<path d="M41.3 52.2Q37.2 53 34.9 57.4Q39.7 56.1 41.3 52.2Z" fill="#e42a66"/>
<path d="M58 53.6Q53.9 55.4 52.4 60.5Q57.1 58 58 53.6Z" fill="#e8326c"/>
<path d="M57.9 53.1Q54.5 55.7 53.8 60.7Q57.5 57.4 57.9 53.1Z" fill="#f0447c"/>
<path d="M64.8 53.2Q66.1 57.3 70.8 59.2Q68.9 54.5 64.8 53.2Z" fill="#dc205c"/>
<path d="M53.7 52Q50.1 53 49.8 57.3Q53.8 55.8 53.7 52Z" fill="#cc1652"/>
<path d="M45 54.4Q46.1 58.2 50.4 59.5Q48.8 55.2 45 54.4Z" fill="#ee3c74"/>
<path d="M33.2 51.4Q29.1 52.6 28.6 57.4Q33.1 55.7 33.2 51.4Z" fill="#f24c82"/>
<path d="M58.3 52.2Q59.6 55.8 63.9 56.3Q62 52.4 58.3 52.2Z" fill="#dc205c"/>
<path d="M48.2 54.1Q45 56 45 60.4Q48.6 57.9 48.2 54.1Z" fill="#d41a54"/>
<path d="M78 53.8Q75.6 56.3 76 60.3Q78.6 57.2 78 53.8Z" fill="#e02664"/>
<path d="M57.3 54.4Q55.2 60 57.4 66.8Q59.5 60 57.3 54.4Z" fill="#e8326c"/>
<path d="M45.5 52Q44.3 57 47.2 62.5Q48.2 56.4 45.5 52Z" fill="#e42a66"/>
<path d="M42.6 53.7Q38.3 57.6 37.8 64.5Q42.5 59.5 42.6 53.7Z" fill="#e42a66"/>
<path d="M35.3 53.5Q31.9 57.6 32.2 64Q36 58.8 35.3 53.5Z" fill="#d41a54"/>
<path d="M23.7 51.7Q18.8 54.8 15.5 61Q21.2 57 23.7 51.7Z" fill="#f0447c"/>
<path d="M65.6 54.2Q62.3 57.7 63.8 63Q67.3 58.7 65.6 54.2Z" fill="#dc205c"/>
<path d="M75.9 52.8Q73.6 56.3 73.5 61.4Q76.1 57 75.9 52.8Z" fill="#e8326c"/>
<path d="M44.8 53.3Q40.3 57 39.4 63.8Q44.4 59.1 44.8 53.3Z" fill="#d41a54"/>
<path d="M44.3 50.4Q40.6 53.2 40.8 58.6Q44.9 55 44.3 50.4Z" fill="#ee3c74"/>
<path d="M50.2 55.3Q50.1 60.5 54.5 64.9Q54.2 58.7 50.2 55.3Z" fill="#e42a66"/>
<path d="M50.1 55Q45.9 58.3 45.7 64.6Q50.4 60.4 50.1 55Z" fill="#d41a54"/>
<path d="M25.4 52.3Q22.9 56.5 24.9 61.9Q27.5 56.8 25.4 52.3Z" fill="#f0447c"/>
<path d="M24.4 53.2Q21.1 56 20.1 61Q23.8 57.4 24.4 53.2Z" fill="#dc205c"/>
<path d="M34 52.4Q30.5 52.3 27.7 55.3Q31.8 55.1 34 52.4Z" fill="#f65c90"/>
<path d="M50.2 54.4Q47.3 58.5 47.3 64.5Q50.6 59.4 50.2 54.4Z" fill="#e42a66"/>
<path d="M72.8 53.3Q75.4 58.1 79.7 63.2Q76.5 57.4 72.8 53.3Z" fill="#f25486"/>
<path d="M43.5 52.5Q45.4 56.9 50.9 58.6Q48.3 53.5 43.5 52.5Z" fill="#d41a54"/>
<path d="M70.9 53.5Q73 60.2 77.2 67.6Q74.5 59.5 70.9 53.5Z" fill="#e8346c"/>
<path d="M52.6 54.8Q51.7 59.1 55.6 62.4Q56.3 57.3 52.6 54.8Z" fill="#f24c82"/>
<path d="M64.1 54.7Q62.4 59.2 64.2 64.6Q65.9 59.1 64.1 54.7Z" fill="#f24c82"/>
<path d="M65.6 53.1Q62.3 56.2 62.4 61.6Q66 57.6 65.6 53.1Z" fill="#cc1652"/>
<path d="M31.3 53.5Q31.4 58.8 36.3 62.6Q35.7 56.4 31.3 53.5Z" fill="#e8326c"/>
<path d="M43.4 53.3Q43.7 58 47.6 62Q46.9 56.4 43.4 53.3Z" fill="#dc205c"/>
<path d="M56.3 51.5Q56.9 56.1 62 57.8Q60.8 52.6 56.3 51.5Z" fill="#e02664"/>
<path d="M45.7 53.5Q41.8 56.3 40.2 61.9Q44.7 58.2 45.7 53.5Z" fill="#f0447c"/>
<path d="M51.1 56Q48.4 60.6 48.9 67Q51.8 61.3 51.1 56Z" fill="#e42a66"/>
<path d="M46.1 54Q47.7 57.8 52.2 59.7Q50 55.4 46.1 54Z" fill="#dc205c"/>
<path d="M56.3 52.3Q56.3 58.1 60.4 63.5Q60.1 56.7 56.3 52.3Z" fill="#d41a54"/>
<path d="M62.5 52.1Q62.3 56.5 65 61.2Q65 55.8 62.5 52.1Z" fill="#e8326c"/>
<path d="M49.9 56Q51.7 59.7 56.3 61.7Q53.8 57.4 49.9 56Z" fill="#dc205c"/>
<path d="M50 56.7Q46.2 59 45.4 64.1Q49.7 61.1 50 56.7Z" fill="#f0447c"/>
<path d="M64.2 52.6Q64.2 57.2 67.8 61.3Q67.4 55.9 64.2 52.6Z" fill="#cc1652"/>
<path d="M56.9 56.7Q55.8 60 58.5 63Q59.5 59.1 56.9 56.7Z" fill="#f65c90"/>
<path d="M57 53.2Q53.8 54 52.4 57.7Q56.1 56.4 57 53.2Z" fill="#cc1652"/>
<path d="M49 55.6Q45.4 56.8 45.2 61.1Q49.1 59.3 49 55.6Z" fill="#f24c82"/>
<path d="M65.5 54.2Q65.3 58.1 69.1 60.9Q68.9 56.2 65.5 54.2Z" fill="#e42a66"/>
<path d="M34.4 53.2Q30.1 55.3 29.1 60.7Q33.9 57.9 34.4 53.2Z" fill="#f0447c"/>
<path d="M48.7 56.4Q44.1 60.1 43.9 67Q49 62.3 48.7 56.4Z" fill="#e02664"/>
<path d="M32.4 51.8Q28.2 55.6 26.3 62.2Q31.2 57.4 32.4 51.8Z" fill="#e02664"/>
<path d="M33.7 52.2Q31.8 56.3 35.1 60.3Q36.8 55.4 33.7 52.2Z" fill="#e42a66"/>
<path d="M54 55.6Q50.7 58.2 52.1 62.7Q55.6 59.5 54 55.6Z" fill="#f0447c"/>
<path d="M59.2 54.4Q58.3 59.2 61.5 64.1Q62.1 58.3 59.2 54.4Z" fill="#cc1652"/>
<path d="M35.3 53.2Q30.8 55.1 29.4 60.7Q34.4 58 35.3 53.2Z" fill="#e8326c"/>
<path d="M57.8 52.5Q55.7 56.2 57.9 60.6Q60 56.1 57.8 52.5Z" fill="#d41a54"/>
<path d="M32.9 51.6Q31.6 56.9 34.5 62.6Q35.6 56.3 32.9 51.6Z" fill="#cc1652"/>
<path d="M71.5 54.6Q72 61.2 74.4 68.8Q73.7 60.8 71.5 54.6Z" fill="#f25486"/>
<path d="M52.8 56.5Q52.6 60.5 56.3 63.4Q56.1 58.8 52.8 56.5Z" fill="#ee3c74"/>
<path d="M22.9 53.5Q18.9 55.4 16.4 60.2Q21.1 57.6 22.9 53.5Z" fill="#ee3c74"/>
<path d="M35.3 53.2Q35.7 56.9 39.4 59.1Q38.6 54.9 35.3 53.2Z" fill="#e42a66"/>
<path d="M44 52.9Q39.6 54 36.4 58.4Q41.6 56.7 44 52.9Z" fill="#e8326c"/>
<path d="M50.2 54.3Q50 58.6 53.9 61.7Q53.8 56.7 50.2 54.3Z" fill="#e8326c"/>
<path d="M58.1 52.1Q53.8 53.1 52.8 58Q57.6 56.4 58.1 52.1Z" fill="#e8326c"/>
<path d="M64.9 56Q61.6 58.7 60.8 63.7Q64.5 60.3 64.9 56Z" fill="#ee3c74"/>
<path d="M45.1 52.7Q46.5 57.2 51.3 60Q49.3 54.7 45.1 52.7Z" fill="#e42a66"/>
<path d="M50.7 56.7Q47.9 60.8 49.6 66.4Q52.6 61.4 50.7 56.7Z" fill="#e42a66"/>
<path d="M50.5 56.7Q48.1 58.9 49.5 62.2Q51.9 59.6 50.5 56.7Z" fill="#f24c82"/>
<path d="M61.6 52.6Q63.5 54.9 67 55.4Q64.6 52.8 61.6 52.6Z" fill="#e8326c"/>
<path d="M48.6 57.8Q44 59.5 41.9 65Q47.2 62.6 48.6 57.8Z" fill="#ee3c74"/>
<path d="M50 56.4Q51.2 59.8 55.3 60.3Q53.6 56.6 50 56.4Z" fill="#cc1652"/>
<path d="M76.3 55.1Q74.9 58.4 75.8 62.7Q77.2 58.6 76.3 55.1Z" fill="#e8326c"/>
<path d="M44.1 53.8Q44.9 57.3 48.9 58.2Q47.6 54.4 44.1 53.8Z" fill="#e8326c"/>
<path d="M65 53.5Q67.9 56.4 72.9 56.6Q69.1 53.3 65 53.5Z" fill="#cc1652"/>
<path d="M65.2 56.8Q62.3 60.5 63.6 65.9Q66.6 61.3 65.2 56.8Z" fill="#e42a66"/>
<path d="M64.1 57.6Q65.8 61.6 70.6 63.6Q68.2 59 64.1 57.6Z" fill="#e8326c"/>
<path d="M65.7 53.6Q64.6 58.2 68 62.5Q68.8 57.1 65.7 53.6Z" fill="#dc205c"/>
<path d="M23.6 55.4Q20.4 59.4 18 65.3Q21.8 60.3 23.6 55.4Z" fill="#e8346c"/>
<path d="M64 53.6Q63.1 58 65.6 62.7Q66.3 57.4 64 53.6Z" fill="#e8326c"/>
<path d="M74.7 55.5Q74.3 59.6 75.5 64.4Q75.9 59.4 74.7 55.5Z" fill="#cc1652"/>
<path d="M73.2 55.5Q73.4 60.6 75.3 66.6Q74.8 60.4 73.2 55.5Z" fill="#f0447c"/>
<path d="M32.1 54Q31.3 58.2 34.7 61.7Q35.3 56.8 32.1 54Z" fill="#e8326c"/>
<path d="M71.6 55.2Q70.8 58.5 72.8 61.9Q73.5 58 71.6 55.2Z" fill="#e8326c"/>
<path d="M64.4 53.9Q66.2 59.6 72.1 63.5Q69.5 56.9 64.4 53.9Z" fill="#dc205c"/>
<path d="M56.2 54Q56.2 59.8 60.4 65.4Q59.8 58.5 56.2 54Z" fill="#e8326c"/>
<path d="M55.4 55.3Q51.8 58.2 52 63.6Q55.9 59.9 55.4 55.3Z" fill="#e8326c"/>
<path d="M51.7 55.8Q47.8 59.7 48.1 66.2Q52.4 61.3 51.7 55.8Z" fill="#ee3c74"/>
<path d="M66.6 55.6Q64.5 59.5 66.1 64.4Q68.2 59.7 66.6 55.6Z" fill="#e8326c"/>
<path d="M50.8 56Q49.6 59.9 53.5 62.6Q54.5 58 50.8 56Z" fill="#d41a54"/>
<path d="M66.2 55.9Q63.6 59.2 65.8 63.6Q68.5 59.5 66.2 55.9Z" fill="#f65c90"/>
<path d="M23.4 56.8Q20.2 58.9 17.6 62.8Q21.4 60.1 23.4 56.8Z" fill="#f24c82"/>
<path d="M64.7 58.8Q61.4 61.7 62.6 66.7Q66.1 63 64.7 58.8Z" fill="#f0447c"/>
<path d="M51.3 59.1Q48.2 60.8 47.2 64.9Q50.8 62.6 51.3 59.1Z" fill="#f65c90"/>
<path d="M52.2 55.7Q50.4 58.5 53 61.3Q54.7 57.8 52.2 55.7Z" fill="#dc205c"/>
<path d="M50.1 56.4Q51.2 60.3 55.5 62.3Q53.8 57.8 50.1 56.4Z" fill="#cc1652"/>
<path d="M64.5 59.1Q61 62.7 59.8 68.6Q63.8 64 64.5 59.1Z" fill="#e02664"/>
<path d="M60.5 57.3Q58.9 60.7 61.7 63.8Q63.2 59.8 60.5 57.3Z" fill="#e42a66"/>
<path d="M63.6 59.8Q62.9 66 66.9 72.3Q67.3 64.8 63.6 59.8Z" fill="#f24c82"/>
<path d="M23.4 57.5Q19.7 61.6 17.6 67.8Q21.8 62.7 23.4 57.5Z" fill="#f0447c"/>
<path d="M31 60.3Q32.1 64.7 36.2 68.1Q34.7 62.9 31 60.3Z" fill="#e02664"/>
<path d="M40.8 59.4Q36.8 63.1 37.2 69.4Q41.5 64.7 40.8 59.4Z" fill="#ee3c74"/>
<path d="M58.2 58.8Q60.3 61.3 64.1 61.8Q61.4 59 58.2 58.8Z" fill="#e8326c"/>
<path d="M48.3 55.8Q45.8 59.5 48.5 63.9Q50.9 59.4 48.3 55.8Z" fill="#e02664"/>
<path d="M42 60.4Q37.6 62 35.9 67.3Q41 65 42 60.4Z" fill="#f24c82"/>
<path d="M64.5 60.5Q60.7 64.7 61.1 71.4Q65.2 66.1 64.5 60.5Z" fill="#cc1652"/>
<path d="M24.1 57.9Q20.1 60 16.7 64.3Q21.4 61.6 24.1 57.9Z" fill="#f65c90"/>
<path d="M50.1 59.1Q46.3 59.4 45.8 63.6Q50 62.8 50.1 59.1Z" fill="#e8326c"/>
<path d="M32.7 59.3Q28.3 60.6 25.7 65.4Q30.8 63.5 32.7 59.3Z" fill="#ee3c74"/>
<path d="M72 58.4Q72.1 61.9 74.6 65.3Q74.2 61.1 72 58.4Z" fill="#e02664"/>
<path d="M50.2 56.1Q49.6 60.4 53.6 63.7Q53.8 58.5 50.2 56.1Z" fill="#e02664"/>
<path d="M55.8 59.4Q54.9 64 57.4 68.9Q58.1 63.4 55.8 59.4Z" fill="#f24c82"/>
<path d="M50.1 59Q49.2 63 52.6 66.3Q53.2 61.6 50.1 59Z" fill="#f24c82"/>
<path d="M50.2 57Q46.4 58.1 45.7 62.6Q49.9 60.9 50.2 57Z" fill="#f0447c"/>
<path d="M57.3 61.2Q53 63.4 52.6 69.1Q57.3 66 57.3 61.2Z" fill="#f65c90"/>
<path d="M51.4 59.3Q48.2 62 47.9 67Q51.6 63.6 51.4 59.3Z" fill="#f0447c"/>
<path d="M43.5 61.2Q41.3 65.4 43.3 70.7Q45.6 65.5 43.5 61.2Z" fill="#cc1652"/>
<path d="M45.3 59.2Q41.7 61.9 41.5 67.1Q45.5 63.7 45.3 59.2Z" fill="#e8326c"/>
<path d="M49.4 59.7Q49.8 63.6 53.9 65.9Q53 61.4 49.4 59.7Z" fill="#e02664"/>
<path d="M71.1 59.5Q71.2 62.9 73.5 66.2Q73.2 62.1 71.1 59.5Z" fill="#e42a66"/>
<path d="M32.3 61.3Q31.4 66.4 34 72.2Q34.7 66 32.3 61.3Z" fill="#ee3c74"/>
<path d="M49.8 56.8Q49.7 60.9 53.1 64.4Q52.9 59.5 49.8 56.8Z" fill="#f0447c"/>
<path d="M32.4 59.4Q33.2 63.8 37.9 66.5Q36.5 61.3 32.4 59.4Z" fill="#f0447c"/>
<path d="M27.9 62.5Q24.1 63.4 23.2 67.8Q27.6 66.4 27.9 62.5Z" fill="#f65c90"/>
<path d="M42.2 61.3Q38.9 66.4 39.9 73.6Q43.5 67.3 42.2 61.3Z" fill="#ee3c74"/>
<path d="M58.7 61.8Q55.8 64.9 55.5 70Q58.8 66.1 58.7 61.8Z" fill="#e8326c"/>
<path d="M65.5 61.6Q65.5 67.3 70.5 72Q69.9 65.2 65.5 61.6Z" fill="#ee3c74"/>
<path d="M58.6 60.6Q55.6 63.1 56.6 67.4Q59.8 64.3 58.6 60.6Z" fill="#d41a54"/>
<path d="M70.4 60.5Q70.9 64.5 73.5 68.6Q72.7 63.8 70.4 60.5Z" fill="#ee3c74"/>
<path d="M48.8 57.7Q46.5 62.3 49.4 67.7Q51.6 62 48.8 57.7Z" fill="#f65c90"/>
<path d="M44.5 60.2Q41.3 62.7 42 67.5Q45.6 64.2 44.5 60.2Z" fill="#e02664"/>
<path d="M51.6 60.1Q53.8 64.5 59.5 66Q56.4 61 51.6 60.1Z" fill="#e02664"/>
<path d="M22.9 61Q20.2 63 18.1 66.4Q21.3 63.9 22.9 61Z" fill="#dc205c"/>
<path d="M55 63.7Q51.9 66.7 53.3 71.5Q56.6 67.7 55 63.7Z" fill="#f0447c"/>
<path d="M42.4 59.8Q41 64.2 43.5 69Q44.8 63.7 42.4 59.8Z" fill="#e02664"/>
<path d="M58.1 62.4Q60.3 66.4 65.5 67.1Q62.6 62.7 58.1 62.4Z" fill="#cc1652"/>
<path d="M40.6 62.1Q37.6 65.9 39 71.3Q42.1 66.7 40.6 62.1Z" fill="#dc205c"/>
<path d="M45.6 58.7Q43.8 63.2 46.8 68Q48.4 62.6 45.6 58.7Z" fill="#f24c82"/>
<path d="M57.2 62.6Q57.2 68.7 62.1 74.2Q61.6 66.9 57.2 62.6Z" fill="#f24c82"/>
<path d="M22.4 61.2Q20 65.8 18.5 72Q21.3 66.3 22.4 61.2Z" fill="#f24c82"/>
<path d="M64.8 59.7Q64.3 65.3 67.4 71.3Q67.7 64.5 64.8 59.7Z" fill="#f0447c"/>
<path d="M68.2 61.3Q70.8 65 75.1 68.5Q71.8 64 68.2 61.3Z" fill="#ee4278"/>
<path d="M42.9 60.3Q38.6 61.7 37.4 66.9Q42.2 64.7 42.9 60.3Z" fill="#f24c82"/>
<path d="M33.7 59.5Q34.3 64.7 39.7 67.6Q38.5 61.6 33.7 59.5Z" fill="#dc205c"/>
<path d="M26.7 64.4Q23.8 67.4 24.2 72.3Q27.4 68.5 26.7 64.4Z" fill="#f65c90"/>
<path d="M42.6 63Q38.4 63.9 35.9 68.3Q40.8 66.9 42.6 63Z" fill="#cc1652"/>
<path d="M59.5 64.5Q59.8 68.9 63.4 72.6Q62.7 67.4 59.5 64.5Z" fill="#d41a54"/>
<path d="M33.2 60.5Q30.6 64.1 32.7 68.9Q35.5 64.4 33.2 60.5Z" fill="#ee3c74"/>
<path d="M49.1 59.3Q44.6 60.8 43.4 66.3Q48.5 64 49.1 59.3Z" fill="#e02664"/>
<path d="M33 61.5Q33.8 66.2 38.2 70Q36.9 64.4 33 61.5Z" fill="#e02664"/>
<path d="M69 62.2Q70.4 66.7 73.3 71.6Q71.4 66.2 69 62.2Z" fill="#dc225c"/>
<path d="M40.6 61.8Q37.5 64.8 38.4 69.7Q41.8 66 40.6 61.8Z" fill="#d41a54"/>
<path d="M66.7 59.8Q63.6 62.9 64.7 67.8Q68 64 66.7 59.8Z" fill="#d41a54"/>
<path d="M24.2 62.4Q20.4 65.7 17.1 70.9Q21.6 66.7 24.2 62.4Z" fill="#e8346c"/>
<path d="M32.9 61.5Q28.4 65.5 26.6 72.6Q31.7 67.4 32.9 61.5Z" fill="#e42a66"/>
<path d="M44.7 60.8Q41.2 63.7 40.8 69.1Q44.7 65.3 44.7 60.8Z" fill="#f0447c"/>
<path d="M44.1 62.5Q43.3 67.6 47.5 71.9Q48 65.9 44.1 62.5Z" fill="#e02664"/>
<path d="M70 62.5Q70.7 66.1 73.1 69.9Q72.1 65.6 70 62.5Z" fill="#e02664"/>
<path d="M25.7 62Q24.5 65.6 28 68.2Q28.9 63.9 25.7 62Z" fill="#e42a66"/>
<path d="M24 62.6Q20.4 64.2 16.7 67.3Q21 65.3 24 62.6Z" fill="#f24c82"/>
<path d="M58.7 61.2Q57.9 66.5 61.6 71.6Q62.2 65.3 58.7 61.2Z" fill="#f0447c"/>
<path d="M58.5 64.4Q54.4 67.7 54.5 73.9Q59 69.6 58.5 64.4Z" fill="#e42a66"/>
<path d="M65.6 62.3Q64.5 67.7 67.7 73.5Q68.6 66.9 65.6 62.3Z" fill="#dc205c"/>
<path d="M32.9 63.3Q30.8 65.6 30.7 69.3Q33.1 66.4 32.9 63.3Z" fill="#e42a66"/>
<path d="M27.5 63.9Q24.8 67.1 26.9 71.4Q29.6 67.5 27.5 63.9Z" fill="#e42a66"/>
<path d="M32.6 62.1Q28.5 65.8 27.4 72.3Q32 67.6 32.6 62.1Z" fill="#e02664"/>
<path d="M34 62.2Q32 66.4 33.8 71.7Q35.8 66.5 34 62.2Z" fill="#e42a66"/>
<path d="M63.4 60.3Q62.1 63.9 63.9 68.2Q65.2 63.7 63.4 60.3Z" fill="#f65c90"/>
<path d="M22.6 63.2Q20.3 67.9 18.7 74Q21.3 68.2 22.6 63.2Z" fill="#ee4278"/>
<path d="M22 63.4Q19.9 67.1 19 72.3Q21.4 67.6 22 63.4Z" fill="#e8326c"/>
<path d="M57.9 62.8Q58.1 69 62.8 74.6Q62.1 67.3 57.9 62.8Z" fill="#ee3c74"/>
<path d="M64.8 62.1Q66 65.5 70.1 66.8Q68.4 62.9 64.8 62.1Z" fill="#f0447c"/>
<path d="M57.4 63.1Q53.2 66.1 53.4 72.2Q57.9 68.2 57.4 63.1Z" fill="#ee3c74"/>
<path d="M59.2 61.2Q56.3 62.8 55.7 66.7Q58.9 64.5 59.2 61.2Z" fill="#f24c82"/>
<path d="M59.4 61.6Q61.6 64.6 66 65Q63.1 61.6 59.4 61.6Z" fill="#ee3c74"/>
<path d="M44.8 64.1Q41 64.6 37.8 67.7Q42.2 66.8 44.8 64.1Z" fill="#f24c82"/>
<path d="M66.3 63.5Q63.1 66.6 63.2 71.9Q66.7 67.9 66.3 63.5Z" fill="#ee3c74"/>
<path d="M52 66.6Q51.1 72.2 53.4 78.6Q54.2 71.8 52 66.6Z" fill="#f0447c"/>
<path d="M31.7 62Q29.7 65.5 30.5 70.3Q32.6 65.9 31.7 62Z" fill="#f65c90"/>
<path d="M40 61.4Q40.4 66.7 45.7 69.7Q44.8 63.6 40 61.4Z" fill="#e8326c"/>
<path d="M32.7 62.4Q29.8 67.4 31.9 73.9Q34.9 67.8 32.7 62.4Z" fill="#dc205c"/>
<path d="M26.9 64Q21.2 63.9 14.5 65.4Q21.4 65.4 26.9 64Z" fill="#f66a98"/>
<path d="M27.8 62.6Q24.2 62.2 22.4 65.9Q26.5 66 27.8 62.6Z" fill="#dc205c"/>
<path d="M27.5 65.7Q27.5 70.4 32.2 73.1Q31.8 67.7 27.5 65.7Z" fill="#cc1652"/>
<path d="M42.3 61.5Q39 63.7 38.9 68.3Q42.5 65.4 42.3 61.5Z" fill="#dc205c"/>
<path d="M65.5 62Q66.3 66.8 70.9 70.5Q69.4 64.8 65.5 62Z" fill="#cc1652"/>
<path d="M33 62.8Q30.2 68.2 32.6 74.9Q35.5 68.3 33 62.8Z" fill="#e02664"/>
<path d="M29.7 62.2Q27.8 66.5 29 72Q31 66.7 29.7 62.2Z" fill="#e02664"/>
<path d="M58.7 61.9Q57.6 66.2 59.9 70.9Q60.8 65.7 58.7 61.9Z" fill="#e42a66"/>
<path d="M28.3 67.5Q24.2 72.4 24.7 80Q29.2 73.9 28.3 67.5Z" fill="#e02664"/>
<path d="M41.1 63.8Q38.8 67.9 39.7 73.5Q42.2 68.4 41.1 63.8Z" fill="#ee3c74"/>
<path d="M31.3 62.2Q29.7 65.8 32 69.9Q33.5 65.5 31.3 62.2Z" fill="#e42a66"/>
<path d="M69.1 64.8Q70.5 67.9 73.3 70.8Q71.5 67.1 69.1 64.8Z" fill="#e8326c"/>
<path d="M22.4 64.9Q20.3 70.1 19 76.9Q21.4 70.4 22.4 64.9Z" fill="#ee4278"/>
<path d="M49.1 67.7Q44.8 70.6 43.8 76.7Q48.6 72.9 49.1 67.7Z" fill="#e02664"/>
<path d="M46.7 67.4Q46.9 70.8 50.8 71.8Q50.1 67.9 46.7 67.4Z" fill="#f65c90"/>
<path d="M29.1 63Q28.4 66.5 31.9 68.8Q32.3 64.6 29.1 63Z" fill="#f65c90"/>
<path d="M67 65.3Q69.7 69.7 74.2 74.1Q70.9 68.7 67 65.3Z" fill="#dc225c"/>
<path d="M34.3 62.5Q30.9 62.8 28.6 66.2Q32.6 65.5 34.3 62.5Z" fill="#e02664"/>
<path d="M28.9 64.8Q29 69.6 32.8 74Q32.4 68.2 28.9 64.8Z" fill="#e42a66"/>
<path d="M68 65.5Q69.3 71.5 72.6 78.4Q70.7 71.1 68 65.5Z" fill="#f66a98"/>
<path d="M59.1 64.1Q60 70 65.1 74.9Q63.6 67.9 59.1 64.1Z" fill="#dc205c"/>
<path d="M25.5 64.9Q22.1 68.7 21 74.7Q24.9 69.9 25.5 64.9Z" fill="#f0447c"/>
<path d="M24.3 65.9Q20.2 68.1 16.1 72.1Q21.1 69.3 24.3 65.9Z" fill="#e8326c"/>
<path d="M68.8 65.9Q70.2 69.4 73.1 72.8Q71.3 68.6 68.8 65.9Z" fill="#e8326c"/>
<path d="M27.5 67.3Q23.6 70.2 22 75.7Q26.4 72 27.5 67.3Z" fill="#e02664"/>
<path d="M53.4 64Q53.9 67.4 57.2 69.9Q56.3 65.9 53.4 64Z" fill="#e8326c"/>
<path d="M28.8 66.4Q25.4 71.9 27.1 79.3Q30.6 72.5 28.8 66.4Z" fill="#dc205c"/>
<path d="M25.5 66.6Q25.1 70.9 28.6 74.4Q28.8 69.4 25.5 66.6Z" fill="#f0447c"/>
<path d="M32.9 68.9Q32.6 74.1 37 78.3Q36.9 72.2 32.9 68.9Z" fill="#dc205c"/>
<path d="M31.6 68.6Q29.5 72.2 31.4 76.6Q33.4 72.3 31.6 68.6Z" fill="#e42a66"/>
<path d="M67.6 66.5Q69.5 71.2 74 75.3Q71.5 69.8 67.6 66.5Z" fill="#d41a54"/>
<path d="M27.6 68.5Q25.2 71.8 26.3 76.5Q28.8 72.4 27.6 68.5Z" fill="#dc205c"/>
<path d="M66.2 67Q67.1 72.4 70.6 78.2Q69.3 71.6 66.2 67Z" fill="#d41a54"/>
<path d="M53.6 67.8Q53 74.2 57.9 80Q58.1 72.4 53.6 67.8Z" fill="#f65c90"/>
<path d="M52.6 65.9Q53.5 70.1 58.4 70.9Q56.9 66.2 52.6 65.9Z" fill="#cc1652"/>
<path d="M35.3 69.9Q32.5 73.9 34.4 79.3Q37.3 74.4 35.3 69.9Z" fill="#ee3c74"/>
<path d="M47.4 68.1Q47.5 73.7 52.1 78.6Q51.6 71.9 47.4 68.1Z" fill="#dc205c"/>
<path d="M22.6 67.6Q20 69.5 18.2 73Q21.2 70.5 22.6 67.6Z" fill="#e02664"/>
<path d="M48.9 67Q48.7 72.3 53.6 76.2Q53.3 69.9 48.9 67Z" fill="#cc1652"/>
<path d="M22.3 67.7Q20.3 72.5 19.5 78.9Q21.7 72.9 22.3 67.7Z" fill="#e02664"/>
<path d="M54.1 68.2Q53 73.9 56.4 80Q57.3 73.1 54.1 68.2Z" fill="#e02664"/>
<path d="M47.5 69.7Q47.9 75.1 52 80.2Q51 73.8 47.5 69.7Z" fill="#d41a54"/>
<path d="M24.9 66.7Q22.8 72.2 24 79.2Q26.2 72.4 24.9 66.7Z" fill="#f65c90"/>
<path d="M26.1 66Q24.7 71.2 26.7 77.3Q28 71 26.1 66Z" fill="#f0447c"/>
<path d="M47.9 69.3Q47.4 74.4 51.2 79.2Q51.3 73.1 47.9 69.3Z" fill="#f0447c"/>
<path d="M35.5 70.6Q34 74.5 37.8 77.3Q39.1 72.7 35.5 70.6Z" fill="#ee3c74"/>
<path d="M47.3 69.2Q45.8 74.1 49.6 78.7Q50.9 72.9 47.3 69.2Z" fill="#e8326c"/>
<path d="M28.3 65.7Q24.3 65.6 20.8 68.8Q25.5 68.6 28.3 65.7Z" fill="#dc205c"/>
<path d="M26 66.6Q23.9 70.4 26.6 74.6Q28.7 70 26 66.6Z" fill="#e42a66"/>
<path d="M65.8 70.8Q62.5 74.3 62.6 80Q66.3 75.6 65.8 70.8Z" fill="#f0447c"/>
<path d="M65.4 68.3Q68.8 73.3 74.1 78.3Q69.9 72.3 65.4 68.3Z" fill="#ee4278"/>
<path d="M34.3 67.7Q33.5 71.3 36.4 74.6Q36.9 70.3 34.3 67.7Z" fill="#cc1652"/>
<path d="M35.2 68.8Q35.1 73.4 38.3 77.8Q38.1 72.4 35.2 68.8Z" fill="#f24c82"/>
<path d="M21.8 68.5Q19.9 71.1 19.6 74.8Q21.7 71.7 21.8 68.5Z" fill="#ee3c74"/>
<path d="M32.8 69.8Q30.2 73.9 31.2 79.6Q34.1 74.5 32.8 69.8Z" fill="#e02664"/>
<path d="M47 68.8Q44.9 74.1 48.3 80Q50.2 73.5 47 68.8Z" fill="#e8326c"/>
<path d="M27.3 67.9Q25.1 72.6 27.6 78.2Q29.9 72.4 27.3 67.9Z" fill="#f0447c"/>
<path d="M68.1 68.7Q69.4 72.5 72.9 76.1Q71.1 71.5 68.1 68.7Z" fill="#e02664"/>
<path d="M56.6 70.1Q53.6 73.7 54.2 79.2Q57.5 74.7 56.6 70.1Z" fill="#cc1652"/>
<path d="M47.8 69.3Q45 72.7 45.1 78.1Q48.2 73.7 47.8 69.3Z" fill="#ee3c74"/>
<path d="M64.5 70.2Q63.4 75.3 66.9 80.4Q67.8 74.3 64.5 70.2Z" fill="#ee3c74"/>
<path d="M44.9 69.7Q42.8 74 43.8 79.7Q46 74.4 44.9 69.7Z" fill="#e8326c"/>
<path d="M55.3 70.4Q52.7 75.9 54 83.1Q56.8 76.4 55.3 70.4Z" fill="#e02664"/>
<path d="M49.6 69.4Q47.7 74.2 50.8 79.5Q52.5 73.7 49.6 69.4Z" fill="#f0447c"/>
<path d="M34.1 69.6Q33.6 74.1 37.6 77.6Q37.7 72.3 34.1 69.6Z" fill="#f0447c"/>
<path d="M54.2 67.8Q51.3 70 50.7 74.3Q54 71.5 54.2 67.8Z" fill="#f24c82"/>
<path d="M48.8 70.2Q48.3 76 52.8 81.2Q53 74.3 48.8 70.2Z" fill="#e02664"/>
<path d="M52.9 71.1Q51.5 76.3 54.1 82.1Q55.4 75.8 52.9 71.1Z" fill="#f65c90"/>
<path d="M54.5 69.7Q56.2 73.8 61.3 74.6Q58.9 70 54.5 69.7Z" fill="#e8326c"/>
<path d="M53.6 69.2Q51 72.7 51 77.9Q53.9 73.6 53.6 69.2Z" fill="#f24c82"/>
<path d="M32.7 70.2Q31.9 75.4 36.4 79.6Q36.8 73.5 32.7 70.2Z" fill="#f24c82"/>
<path d="M48.3 71.4Q44.2 72.6 41.3 76.8Q46.1 75.1 48.3 71.4Z" fill="#e8326c"/>
<path d="M33.5 68.2Q29.6 70.6 28.8 75.8Q33.1 72.7 33.5 68.2Z" fill="#e42a66"/>
<path d="M47.1 70.4Q49.2 74.9 54.8 76.2Q52 71.1 47.1 70.4Z" fill="#e02664"/>
<path d="M33.8 71Q29.8 71.8 29.5 76.4Q34 75.1 33.8 71Z" fill="#f65c90"/>
<path d="M69.5 70Q68.9 73.6 70.6 77.8Q71.1 73.4 69.5 70Z" fill="#d41a54"/>
<path d="M24.9 70.1Q21 72.4 17.2 76.5Q21.9 73.5 24.9 70.1Z" fill="#f25486"/>
<path d="M35.3 70.3Q33.1 74.1 33.9 79.2Q36.2 74.6 35.3 70.3Z" fill="#cc1652"/>
<path d="M55 70.2Q54.8 74 58.2 76.9Q58.1 72.4 55 70.2Z" fill="#e8326c"/>
<path d="M65 70.5Q68.8 73.4 74.1 75.5Q69.4 72.1 65 70.5Z" fill="#dc205c"/>
<path d="M54.8 67.5Q56.9 71.5 62.1 72.4Q59.3 68 54.8 67.5Z" fill="#f24c82"/>
<path d="M52.7 69.1Q53 74.8 57.6 79.7Q56.8 73 52.7 69.1Z" fill="#d41a54"/>
<path d="M27.5 68.6Q23.8 70 22.8 74.6Q27 72.6 27.5 68.6Z" fill="#cc1652"/>
<path d="M52 69Q53.6 73.7 59.2 74.7Q56.9 69.6 52 69Z" fill="#f65c90"/>
<path d="M66.9 70.8Q67.4 73.7 69.5 76.6Q68.7 73.1 66.9 70.8Z" fill="#dc205c"/>
<path d="M33.1 70.7Q30.6 75.4 32 81.4Q34.5 75.7 33.1 70.7Z" fill="#e02664"/>
<path d="M26.8 71.1Q21.5 75.8 16.4 82.8Q22.8 76.9 26.8 71.1Z" fill="#ee4278"/>
<path d="M65.6 68.3Q61.7 71.6 61.5 77.6Q65.8 73.4 65.6 68.3Z" fill="#e02664"/>
<path d="M26.5 71.2Q21.6 76.4 16.9 83.7Q22.7 77.2 26.5 71.2Z" fill="#f66a98"/>
<path d="M63.9 71.3Q67.1 74.7 72 77.8Q67.9 73.7 63.9 71.3Z" fill="#e8346c"/>
<path d="M64.3 72.8Q61.4 75.4 62.6 79.7Q65.6 76.4 64.3 72.8Z" fill="#f0447c"/>
<path d="M24.6 71.4Q20.7 73.4 17 77.3Q21.7 74.7 24.6 71.4Z" fill="#e02664"/>
<path d="M23.3 71.5Q20.8 75.1 19.1 80.2Q22 75.7 23.3 71.5Z" fill="#ee3c74"/>
<path d="M67 71.5Q66.6 76.3 68.6 81.8Q68.9 75.9 67 71.5Z" fill="#e8326c"/>
<path d="M22.8 71.8Q20.6 76.5 20.1 82.8Q22.6 77 22.8 71.8Z" fill="#cc1652"/>
<path d="M26.9 69.3Q23.2 68.9 20.9 72.5Q25.2 72.6 26.9 69.3Z" fill="#f65c90"/>
<path d="M64.9 72Q66.3 77.9 69.7 84.4Q67.9 77.3 64.9 72Z" fill="#f66a98"/>
<path d="M47.4 70.4Q46.2 74.3 49 78.2Q50 73.6 47.4 70.4Z" fill="#dc205c"/>
<path d="M53.4 70.2Q53.7 74.9 58.4 77.8Q57.6 72.3 53.4 70.2Z" fill="#ee3c74"/>
<path d="M65.6 72.4Q67.5 75.2 70.7 77.6Q68.3 74.3 65.6 72.4Z" fill="#ee3c74"/>
<path d="M32.9 70.2Q28.8 73.1 26.9 78.7Q31.6 75 32.9 70.2Z" fill="#e42a66"/>
<path d="M54.6 69.9Q55.3 75.6 59.6 81.1Q58.4 74.3 54.6 69.9Z" fill="#f24c82"/>
<path d="M51 70.8Q46.4 72.1 44.2 77.2Q49.5 75.4 51 70.8Z" fill="#e02664"/>
<path d="M50.6 69.9Q47.9 71.7 47.5 75.6Q50.5 73.2 50.6 69.9Z" fill="#f0447c"/>
<path d="M54.2 75.2Q51.4 79.3 52.9 85Q55.8 79.9 54.2 75.2Z" fill="#e02664"/>
<path d="M32.6 69.9Q28.7 73.9 28.5 80.5Q32.8 75.5 32.6 69.9Z" fill="#d41a54"/>
<path d="M35.5 71.8Q34 76.2 36.3 81.2Q37.7 75.9 35.5 71.8Z" fill="#cc1652"/>
<path d="M64.7 74.9Q63 79.1 64.4 84.4Q66.1 79.2 64.7 74.9Z" fill="#cc1652"/>
<path d="M64.3 73.3Q66.7 77.4 70.9 81.4Q67.8 76.5 64.3 73.3Z" fill="#dc225c"/>
<path d="M34.5 73.5Q32 78.8 30.4 85.8Q33.3 79.2 34.5 73.5Z" fill="#f25486"/>
<path d="M25.6 76.5Q25.3 80 28.9 81.8Q28.9 77.8 25.6 76.5Z" fill="#cc1652"/>
<path d="M64.1 76.4Q61 79.9 62.4 85.2Q65.7 80.8 64.1 76.4Z" fill="#f24c82"/>
<path d="M34.7 74.5Q30.6 80.1 27.4 87.9Q32.2 81 34.7 74.5Z" fill="#ee4278"/>
<path d="M66.3 74.6Q65.8 79.2 67.9 84.4Q68.2 78.8 66.3 74.6Z" fill="#ee3c74"/>
<path d="M51.3 72.4Q52.3 75.8 55.9 77.8Q54.5 73.9 51.3 72.4Z" fill="#cc1652"/>
<path d="M34.2 74.7Q31.7 78.7 29.9 84.2Q32.9 79.3 34.2 74.7Z" fill="#dc205c"/>
<path d="M23.3 74.9Q21.1 77.8 20 82.1Q22.5 78.5 23.3 74.9Z" fill="#f0447c"/>
<path d="M66.6 75Q66.5 77.9 68.8 80.6Q68.7 77.1 66.6 75Z" fill="#dc205c"/>
<path d="M24.9 74.7Q21.5 77.6 22.5 82.7Q26.1 79 24.9 74.7Z" fill="#e02664"/>
<path d="M28.7 77.7Q25.6 80.7 25.5 85.9Q29 82.1 28.7 77.7Z" fill="#e02664"/>
<path d="M64.6 75.4Q65.6 80.8 68.6 86.7Q67.2 80.2 64.6 75.4Z" fill="#ee3c74"/>
<path d="M33.4 75.6Q32.6 81.8 33.1 89.4Q33.9 81.8 33.4 75.6Z" fill="#dc225c"/>
<path d="M49 76.5Q47.2 79.4 48 83.3Q50 79.8 49 76.5Z" fill="#f65c90"/>
<path d="M62.9 75.4Q59.8 76.6 59.6 80.4Q63 78.7 62.9 75.4Z" fill="#d41a54"/>
<path d="M51.7 78.6Q50.8 83.8 53.2 89.8Q53.9 83.4 51.7 78.6Z" fill="#dc205c"/>
<path d="M52.3 78.6Q53.7 83.5 59.2 85.7Q57.1 80.1 52.3 78.6Z" fill="#f0447c"/>
<path d="M50.6 78.5Q51.8 82.3 56.4 82.8Q54.6 78.6 50.6 78.5Z" fill="#e42a66"/>
<path d="M63.2 75.3Q60.5 80.1 62 86.5Q64.8 80.6 63.2 75.3Z" fill="#f65c90"/>
<path d="M47.8 79.1Q48.4 84.5 52.5 89.6Q51.4 83.1 47.8 79.1Z" fill="#dc205c"/>
<path d="M26.6 76.3Q23.4 81.2 20.6 87.7Q24.3 81.7 26.6 76.3Z" fill="#e8346c"/>
<path d="M63.5 75Q60.2 79.6 61.3 86.3Q64.8 80.6 63.5 75Z" fill="#e42a66"/>
<path d="M32.4 76.4Q31.6 80.5 33 85.3Q33.7 80.3 32.4 76.4Z" fill="#f0447c"/>
<path d="M49.7 78Q51.5 83.1 56.5 87.4Q54.1 81.2 49.7 78Z" fill="#f24c82"/>
<path d="M64 75.8Q60.9 76.9 60.6 80.7Q64 79.1 64 75.8Z" fill="#ee3c74"/>
<path d="M33.4 76.9Q29.9 81 27.9 87.1Q31.9 82 33.4 76.9Z" fill="#d41a54"/>
<path d="M48.6 79.6Q50.3 84.6 55.5 88.3Q53.1 82.4 48.6 79.6Z" fill="#dc205c"/>
<path d="M51.5 78.7Q48.3 82.6 48.9 88.5Q52.3 83.7 51.5 78.7Z" fill="#f65c90"/>
<path d="M26.7 77.3Q21.6 78.5 16.3 82.1Q22.4 80.5 26.7 77.3Z" fill="#f65c90"/>
<path d="M65.6 76.1Q62.9 79.6 65.1 84.2Q67.9 79.9 65.6 76.1Z" fill="#ee3c74"/>
<path d="M31.1 77.6Q27.2 83.6 23.4 91.5Q28.1 84.1 31.1 77.6Z" fill="#e8346c"/>
<path d="M26.2 77.1Q25.5 80.7 29.3 82.5Q29.7 78.3 26.2 77.1Z" fill="#cc1652"/>
<path d="M26 77.9Q25.8 81.7 28.8 85.1Q28.6 80.6 26 77.9Z" fill="#d41a54"/>
<path d="M32.8 77.7Q30.5 79.7 30.1 83.4Q32.7 80.8 32.8 77.7Z" fill="#d41a54"/>
<path d="M27.4 75.9Q23.1 77.3 22.7 82.5Q27.4 80.4 27.4 75.9Z" fill="#f0447c"/>
<path d="M36.9 78Q33.5 83.5 30.6 91Q34.7 84.2 36.9 78Z" fill="#e8346c"/>
<path d="M63.6 78Q64.9 82.5 68.5 86.8Q66.7 81.5 63.6 78Z" fill="#cc1652"/>
<path d="M24.4 78.1Q22.6 81.5 22.1 86.2Q24.2 81.9 24.4 78.1Z" fill="#d41a54"/>
<path d="M31.2 78.3Q29.1 83.1 27.9 89.5Q30.4 83.5 31.2 78.3Z" fill="#f66a98"/>
<path d="M38.6 78.9Q38.8 82.7 42.5 85.2Q42 80.7 38.6 78.9Z" fill="#d41a54"/>
<path d="M34.4 78.4Q32 81.4 31.4 86Q34.2 82.2 34.4 78.4Z" fill="#e02664"/>
<path d="M63.9 78.5Q64.2 83.1 66.6 88.3Q66 82.6 63.9 78.5Z" fill="#f66a98"/>
<path d="M39.2 80.2Q37.5 84.1 39.8 88.5Q41.4 83.8 39.2 80.2Z" fill="#f65c90"/>
<path d="M25.6 78.7Q22.1 79.8 19.2 83Q23.3 81.4 25.6 78.7Z" fill="#ee3c74"/>
<path d="M51.6 80Q46.9 81.3 45.6 86.7Q50.9 84.8 51.6 80Z" fill="#cc1652"/>
<path d="M40.8 79.9Q36.5 83.2 35.8 89.6Q40.5 85.3 40.8 79.9Z" fill="#e02664"/>
<path d="M40.4 77.3Q37 80.8 38.8 86.2Q42.3 81.8 40.4 77.3Z" fill="#e8326c"/>
<path d="M37.4 79Q38.3 83 42.7 85.2Q41.3 80.6 37.4 79Z" fill="#e42a66"/>
<path d="M26 79Q23.8 83.6 23.3 89.9Q25.8 84.2 26 79Z" fill="#e42a66"/>
<path d="M65 79.1Q63.3 84.4 63.1 91.1Q65 84.6 65 79.1Z" fill="#dc225c"/>
<path d="M39.8 78.7Q37.2 82.7 37.6 88.5Q40.5 83.5 39.8 78.7Z" fill="#f0447c"/>
<path d="M29.6 79.7Q25.2 83.7 20.8 89.5Q26.1 84.5 29.6 79.7Z" fill="#f25486"/>
<path d="M61.1 79.7Q61.7 86.8 63.7 95.3Q62.8 86.6 61.1 79.7Z" fill="#e8346c"/>
<path d="M30.4 79.8Q29.1 82.7 29.9 86.4Q31.3 82.8 30.4 79.8Z" fill="#e42a66"/>
<path d="M39.3 78Q37.3 83.9 40.2 90.7Q42 83.5 39.3 78Z" fill="#cc1652"/>
<path d="M58.8 80Q60.6 86.8 64.7 94.4Q62.3 86.1 58.8 80Z" fill="#dc225c"/>
<path d="M57.1 80Q58.5 86.8 61.6 94.7Q59.8 86.4 57.1 80Z" fill="#f66a98"/>
<path d="M40.7 79.7Q37.7 82.6 38.5 87.4Q41.7 83.7 40.7 79.7Z" fill="#ee3c74"/>
<path d="M30.1 80.3Q27.6 84.1 25.8 89.2Q28.7 84.6 30.1 80.3Z" fill="#dc205c"/>
<path d="M49.6 77.9Q46.4 79 45 82.6Q48.6 81.1 49.6 77.9Z" fill="#f24c82"/>
<path d="M52.1 80.4Q51.7 84.5 55.6 87.2Q55.7 82.4 52.1 80.4Z" fill="#e02664"/>
<path d="M25.8 80.6Q23.5 82.3 22 85.4Q24.7 83.3 25.8 80.6Z" fill="#d41a54"/>
<path d="M35.7 80.7Q34.4 85.9 33.9 92.4Q35.4 86.1 35.7 80.7Z" fill="#ee4278"/>
<path d="M35.4 80.8Q32.7 82.6 31.1 86.1Q34.2 83.8 35.4 80.8Z" fill="#cc1652"/>
<path d="M50.5 82.5Q51.1 87.1 56.3 88.9Q55 83.6 50.5 82.5Z" fill="#e42a66"/>
<path d="M38.9 78.2Q36.4 82.1 37.5 87.5Q40.1 82.6 38.9 78.2Z" fill="#ee3c74"/>
<path d="M61.2 81Q63.5 85.5 68 89.6Q65 84.2 61.2 81Z" fill="#f24c82"/>
<path d="M34.7 81Q32.9 84.4 32.7 88.9Q34.8 84.8 34.7 81Z" fill="#f24c82"/>
<path d="M41.3 79.2Q37.6 78.8 35.6 82.5Q39.8 82.6 41.3 79.2Z" fill="#f24c82"/>
<path d="M51.1 79.5Q49 84.3 50.1 90.4Q52.3 84.6 51.1 79.5Z" fill="#dc205c"/>
<path d="M31.4 81.2Q28.7 83.4 27.2 87.4Q30.3 84.6 31.4 81.2Z" fill="#d41a54"/>
<path d="M40 80.1Q37 83.3 36.6 88.5Q39.9 84.5 40 80.1Z" fill="#d41a54"/>
<path d="M62.2 81.6Q64.8 84.2 68.9 85.8Q65.6 82.8 62.2 81.6Z" fill="#f0447c"/>
<path d="M51 79.3Q46.5 82.4 45.3 88.8Q50.3 84.7 51 79.3Z" fill="#cc1652"/>
<path d="M27.6 81.9Q25.7 84.4 25.9 88.1Q27.9 85 27.6 81.9Z" fill="#f65c90"/>
<path d="M62.1 81.9Q62.7 86.4 64.7 91.5Q63.9 86.1 62.1 81.9Z" fill="#dc205c"/>
<path d="M26.7 82Q24.4 84.6 24.1 88.7Q26.6 85.4 26.7 82Z" fill="#f0447c"/>
<path d="M52 80.3Q48 82.4 46.5 87.7Q51.1 84.8 52 80.3Z" fill="#cc1652"/>
<path d="M35.8 82.4Q33.4 85.6 32.2 90.4Q35 86.4 35.8 82.4Z" fill="#e42a66"/>
<path d="M59.1 83Q60.4 87.3 63.9 91.4Q62.1 86.3 59.1 83Z" fill="#f65c90"/>
<path d="M40.1 83.1Q37.5 88.5 35.5 95.6Q38.6 88.9 40.1 83.1Z" fill="#f25486"/>
<path d="M61.1 83.2Q61.2 87.9 63.8 93Q63.4 87.3 61.1 83.2Z" fill="#e42a66"/>
<path d="M58.2 83.2Q58.8 87.5 60.8 92.3Q60 87.1 58.2 83.2Z" fill="#ee3c74"/>
<path d="M57.9 83.4Q59.4 86.7 63 89.2Q61 85.3 57.9 83.4Z" fill="#e02664"/>
<path d="M52 83Q48.1 85.7 46.6 91.1Q51.1 87.6 52 83Z" fill="#e8326c"/>
<path d="M40.5 83.9Q39 89.6 38.6 96.8Q40.3 89.8 40.5 83.9Z" fill="#dc225c"/>
<path d="M36.9 84Q34.3 86.5 33.2 90.7Q36.2 87.5 36.9 84Z" fill="#e02664"/>
<path d="M38.8 84.2Q35.8 87.7 33.4 92.6Q36.9 88.3 38.8 84.2Z" fill="#f65c90"/>
<path d="M41.4 84.3Q41.9 90.8 43.7 98.6Q42.9 90.6 41.4 84.3Z" fill="#f25486"/>
<path d="M45.1 82.5Q42.9 84.4 43.6 87.7Q45.9 85.3 45.1 82.5Z" fill="#f24c82"/>
<path d="M55.6 84.3Q54.4 91.1 54.2 99.4Q55.5 91.2 55.6 84.3Z" fill="#f66a98"/>
<path d="M51.3 84.8Q52.1 91.9 55 100.1Q53.8 91.5 51.3 84.8Z" fill="#e8346c"/>
<path d="M46.5 85Q45.1 91.5 44.9 99.7Q46.5 91.7 46.5 85Z" fill="#ee4278"/>
<path d="M38.8 85.1Q37.7 90 38.1 96Q39.3 90 38.8 85.1Z" fill="#f65c90"/>
<path d="M48.1 85.5Q43.6 90.8 39.7 98.3Q45 91.7 48.1 85.5Z" fill="#f66a98"/>
<path d="M57 85.5Q57.6 89.1 60.5 92.3Q59.6 88.1 57 85.5Z" fill="#f0447c"/>
<path d="M56.9 85.7Q56.3 90.5 57.3 96.3Q57.9 90.4 56.9 85.7Z" fill="#dc225c"/>
<path d="M38 85.9Q36.5 88.8 36.8 92.8Q38.3 89.2 38 85.9Z" fill="#f24c82"/>
<path d="M45 86.1Q47.1 92.3 51.5 99Q48.7 91.5 45 86.1Z" fill="#ee4278"/>
<path d="M39.8 86.4Q38.8 90.5 39.8 95.4Q40.8 90.5 39.8 86.4Z" fill="#dc205c"/>
<path d="M58.6 86.7Q56.9 89.7 56.9 93.9Q58.7 90.1 58.6 86.7Z" fill="#f0447c"/>
<path d="M43.5 87Q41.5 91.1 41 96.7Q43.3 91.6 43.5 87Z" fill="#dc205c"/>
<path d="M44 87.1Q42.5 91.8 43.3 97.7Q44.9 91.9 44 87.1Z" fill="#f24c82"/>
<path d="M40.7 87.1Q40.5 91 41.6 95.6Q41.7 90.9 40.7 87.1Z" fill="#d41a54"/>
<path d="M49 87.4Q49.6 92.4 51.9 98Q51.1 92 49 87.4Z" fill="#f25486"/>
<path d="M56.4 87.7Q56 91.4 57.7 95.5Q58 91 56.4 87.7Z" fill="#e8326c"/>
<path d="M51 87.7Q52.5 92.8 56 98.1Q54 92 51 87.7Z" fill="#d41a54"/>
<path d="M54.5 88.4Q53.3 92 54.5 96.4Q55.7 92 54.5 88.4Z" fill="#e02664"/>
<path d="M54.5 88.8Q55 91.9 57.3 95Q56.5 91.3 54.5 88.8Z" fill="#e02664"/>
<path d="M48.1 88.9Q48.6 92.8 50.6 97.1Q49.8 92.4 48.1 88.9Z" fill="#d41a54"/>
<path d="M43.7 89.3Q44.4 92.6 46.6 95.9Q45.6 92 43.7 89.3Z" fill="#d41a54"/>
<path d="M49.7 89.4Q50 92.9 51.7 96.7Q51.2 92.5 49.7 89.4Z" fill="#f0447c"/>
<path d="M51.9 89.7Q51.2 92.8 52.1 96.6Q52.8 92.8 51.9 89.7Z" fill="#f0447c"/>
<path d="M47.8 89.7Q47.1 92.5 47.8 96Q48.5 92.5 47.8 89.7Z" fill="#f65c90"/>
<path d="M48.1 90.1Q45.4 91.7 44.3 95.2Q47.4 93.1 48.1 90.1Z" fill="#d41a54"/>
<path d="M52.9 59.1Q52.8 61.8 53.5 65Q53.6 61.7 52.9 59.1Z" fill="#ff86ac" opacity="0.85"/>
<path d="M36.4 78.7Q34.8 80.8 33.6 83.7Q35.4 81.1 36.4 78.7Z" fill="#ff9cbc" opacity="0.85"/>
<path d="M60.1 63.7Q61 65.5 62.6 67.2Q61.6 65.1 60.1 63.7Z" fill="#f76a98" opacity="0.85"/>
<path d="M54.9 57.9Q55.1 59.6 56.3 61.3Q55.9 59.2 54.9 57.9Z" fill="#f76a98" opacity="0.85"/>
<path d="M56.4 42.9Q55 44.4 54.1 46.6Q55.7 44.8 56.4 42.9Z" fill="#f76a98" opacity="0.85"/>
<path d="M60.6 62.5Q59.8 65.6 59.7 69.4Q60.5 65.6 60.6 62.5Z" fill="#ff86ac" opacity="0.85"/>
<path d="M75.4 50.9Q75.5 52.8 76.8 54.9Q76.6 52.5 75.4 50.9Z" fill="#f76a98" opacity="0.85"/>
<path d="M65.1 34.2Q64.4 36.5 64.6 39.4Q65.3 36.6 65.1 34.2Z" fill="#f76a98" opacity="0.85"/>
<path d="M55.3 56.2Q55 58.9 55.8 62.1Q56 58.8 55.3 56.2Z" fill="#ff86ac" opacity="0.85"/>
<path d="M36.4 45.7Q35.1 47.2 34.5 49.6Q36 47.7 36.4 45.7Z" fill="#f76a98" opacity="0.85"/>
<path d="M64.1 61.5Q63.3 63.7 63.3 66.6Q64.2 63.8 64.1 61.5Z" fill="#ff86ac" opacity="0.85"/>
<path d="M55.9 32Q55.6 34.4 56.4 37.2Q56.6 34.3 55.9 32Z" fill="#ff9cbc" opacity="0.85"/>
<path d="M45.5 71.7Q46.6 74.6 48.7 77.7Q47.2 74.2 45.5 71.7Z" fill="#ff9cbc" opacity="0.85"/>
<path d="M55.7 55.5Q54.5 57.6 54 60.4Q55.3 57.9 55.7 55.5Z" fill="#ff9cbc" opacity="0.85"/>
<path d="M58.2 49.9Q59.1 51.1 60.7 51.7Q59.5 50.4 58.2 49.9Z" fill="#ff9cbc" opacity="0.85"/>
<path d="M27.9 44.2Q27.2 46.3 26.9 49.1Q27.7 46.4 27.9 44.2Z" fill="#f76a98" opacity="0.85"/>
<path d="M35.7 54.6Q35.2 56.1 35.4 58.1Q35.9 56.2 35.7 54.6Z" fill="#f76a98" opacity="0.85"/>
<path d="M45.2 58.4Q42.8 60.2 40.3 63Q43.2 60.7 45.2 58.4Z" fill="#ff9cbc" opacity="0.85"/>
<path d="M42.7 36.7Q41.9 38.3 41.8 40.6Q42.7 38.5 42.7 36.7Z" fill="#ff9cbc" opacity="0.85"/>
<path d="M42.5 53.1Q41.8 56.2 41.4 60Q42.3 56.3 42.5 53.1Z" fill="#ff9cbc" opacity="0.85"/>
<path d="M26.5 53.4Q24.9 54.7 23.7 56.9Q25.6 55.3 26.5 53.4Z" fill="#f76a98" opacity="0.85"/>
<path d="M45 50.1Q44 51.4 43.6 53.3Q44.8 51.7 45 50.1Z" fill="#ff9cbc" opacity="0.85"/>
<path d="M46.4 65.1Q45.2 66.2 44.8 68.2Q46.1 66.7 46.4 65.1Z" fill="#ff9cbc" opacity="0.85"/>
<path d="M33.6 62.5Q31.9 63.1 30.5 64.8Q32.5 63.9 33.6 62.5Z" fill="#f76a98" opacity="0.85"/>
<path d="M34.2 48.2Q32.3 50.3 30.9 53.5Q33.2 50.9 34.2 48.2Z" fill="#ff9cbc" opacity="0.85"/>
<path d="M50.6 44.9Q49.6 46.5 49.3 48.7Q50.4 46.7 50.6 44.9Z" fill="#ff86ac" opacity="0.85"/>
<path d="M44.1 37.2Q43.7 40.2 43.8 43.8Q44.2 40.2 44.1 37.2Z" fill="#ff9cbc" opacity="0.85"/>
<path d="M34 60.7Q32.9 63 32.1 66Q33.4 63.2 34 60.7Z" fill="#f76a98" opacity="0.85"/>
<path d="M62.9 42.7Q63 44.1 63.9 45.5Q63.8 43.8 62.9 42.7Z" fill="#ff86ac" opacity="0.85"/>
<path d="M47.9 44.7Q47.7 47.3 48 50.4Q48.2 47.2 47.9 44.7Z" fill="#f76a98" opacity="0.85"/>
<path d="M49.7 33.5Q50.2 35.7 51.5 38.1Q50.8 35.5 49.7 33.5Z" fill="#ff86ac" opacity="0.85"/>
<path d="M36.1 42.8Q35.6 45.2 35.9 48.1Q36.5 45.2 36.1 42.8Z" fill="#ff9cbc" opacity="0.85"/>
<path d="M44 71.2Q43.1 73.5 42.9 76.5Q43.9 73.7 44 71.2Z" fill="#ff9cbc" opacity="0.85"/>
<path d="M37.3 41.9Q38 44.6 39.9 47.5Q38.9 44.2 37.3 41.9Z" fill="#ff86ac" opacity="0.85"/>
<path d="M50.1 73.1Q49.4 76.1 49.4 79.8Q50.2 76.2 50.1 73.1Z" fill="#f76a98" opacity="0.85"/>
<path d="M70.3 64.6Q72.5 66.8 75.6 69Q72.9 66.4 70.3 64.6Z" fill="#f76a98" opacity="0.85"/>
<path d="M29.6 43.6Q27.1 44.8 24.2 46.7Q27.3 45.3 29.6 43.6Z" fill="#f76a98" opacity="0.85"/>
<path d="M38.7 46.3Q38.2 48.1 38.4 50.2Q38.9 48.1 38.7 46.3Z" fill="#ff9cbc" opacity="0.85"/>
<path d="M36.8 68.9Q36 70.3 36.1 72.3Q36.9 70.5 36.8 68.9Z" fill="#ff9cbc" opacity="0.85"/>
<path d="M53.8 67Q53.2 69 53.4 71.4Q54.1 69 53.8 67Z" fill="#ff9cbc" opacity="0.85"/>
<path d="M67.1 41.6Q69.2 43.6 72.3 45.1Q69.8 42.7 67.1 41.6Z" fill="#ff86ac" opacity="0.85"/>
<path d="M25 57.9Q24.7 60.6 25.4 64Q25.6 60.6 25 57.9Z" fill="#ff9cbc" opacity="0.85"/>
<path d="M47 34.1Q46.6 36.2 46.8 38.8Q47.3 36.2 47 34.1Z" fill="#ff86ac" opacity="0.85"/>
<path d="M30.1 71.8Q28.9 73.9 28.3 76.7Q29.7 74.1 30.1 71.8Z" fill="#f76a98" opacity="0.85"/>
<path d="M56 54.2Q54.1 56.6 52.6 60Q54.8 57 56 54.2Z" fill="#ff9cbc" opacity="0.85"/>
<path d="M36.1 60.9Q34.3 62.4 32.7 64.9Q34.9 63 36.1 60.9Z" fill="#ff86ac" opacity="0.85"/>
<path d="M35.1 33Q33.1 34.7 31.4 37.3Q33.7 35.2 35.1 33Z" fill="#ff9cbc" opacity="0.85"/>
<path d="M33.2 75.5Q32 78.4 31.3 82.1Q32.8 78.6 33.2 75.5Z" fill="#ff9cbc" opacity="0.85"/>
<path d="M55.5 36.6Q57.5 39 60.8 41Q58.2 38.2 55.5 36.6Z" fill="#ff9cbc" opacity="0.85"/>
<path d="M48.9 40.8Q48.8 43.6 49.8 46.7Q49.8 43.4 48.9 40.8Z" fill="#ff9cbc" opacity="0.85"/>
<path d="M21.6 66.3Q20.7 68.8 20.2 72.1Q21.3 69 21.6 66.3Z" fill="#f76a98" opacity="0.85"/>
<path d="M47.4 43Q48.9 45.5 51.6 47.9Q49.6 44.9 47.4 43Z" fill="#ff9cbc" opacity="0.85"/>
<path d="M49.7 61.4Q48.7 63.7 48.3 66.6Q49.4 63.8 49.7 61.4Z" fill="#f76a98" opacity="0.85"/>
<path d="M40.1 32.7Q41.9 35.1 44.9 37.2Q42.6 34.4 40.1 32.7Z" fill="#ff86ac" opacity="0.85"/>
<path d="M29.7 41.4Q30.9 44.1 33.3 46.8Q31.8 43.5 29.7 41.4Z" fill="#f76a98" opacity="0.85"/>
<path d="M33 76.6Q32.7 78.6 33.4 81Q33.6 78.5 33 76.6Z" fill="#ff9cbc" opacity="0.85"/>
<path d="M49.7 51.2Q50.8 53.1 53 54.6Q51.6 52.3 49.7 51.2Z" fill="#ff9cbc" opacity="0.85"/>
<path d="M27.2 58.3Q24.7 60 22.1 62.6Q25.2 60.5 27.2 58.3Z" fill="#ff9cbc" opacity="0.85"/>
<path d="M44.6 45.6Q45.6 48 47.9 50.3Q46.5 47.4 44.6 45.6Z" fill="#ff86ac" opacity="0.85"/>
<path d="M43.6 61.3Q43.6 64.3 44.6 68Q44.5 64.2 43.6 61.3Z" fill="#ff9cbc" opacity="0.85"/>
<path d="M52.8 68.6Q53.2 71 54.8 73.4Q54.2 70.6 52.8 68.6Z" fill="#ff86ac" opacity="0.85"/>
<path d="M64.3 33.7Q66 36.1 68.5 38.6Q66.5 35.7 64.3 33.7Z" fill="#ff86ac" opacity="0.85"/>
<path d="M72.7 46.6Q73.3 48 74.7 49.1Q73.9 47.5 72.7 46.6Z" fill="#f76a98" opacity="0.85"/>
<path d="M70 40.8Q71.5 42.1 73.6 43.4Q71.8 41.7 70 40.8Z" fill="#ff86ac" opacity="0.85"/>
<path d="M53.1 62.7Q53.1 64.9 54.3 67.4Q54.2 64.6 53.1 62.7Z" fill="#f76a98" opacity="0.85"/>
<path d="M30.8 65Q29.8 66.4 29.2 68.4Q30.4 66.7 30.8 65Z" fill="#ff86ac" opacity="0.85"/>
<path d="M36.9 56.4Q38.3 59.1 40.6 62Q38.9 58.7 36.9 56.4Z" fill="#ff86ac" opacity="0.85"/>
<path d="M44 45Q45 46.4 46.7 47.7Q45.4 46 44 45Z" fill="#f76a98" opacity="0.85"/>
<path d="M59.9 36.9Q60.6 39 62.4 40.8Q61.4 38.4 59.9 36.9Z" fill="#f76a98" opacity="0.85"/>
<path d="M31.3 73.7Q30.6 75.9 30.6 78.6Q31.3 76 31.3 73.7Z" fill="#ff9cbc" opacity="0.85"/>
<path d="M48.5 66.9Q47.9 68.5 47.6 70.7Q48.4 68.6 48.5 66.9Z" fill="#f76a98" opacity="0.85"/>
<path d="M50.8 60.6Q49.7 62.6 50 65.3Q51.1 62.8 50.8 60.6Z" fill="#640822" opacity="0.85"/>
<path d="M47 73.7Q45.5 76.2 44.9 79.7Q46.7 76.6 47 73.7Z" fill="#900e36" opacity="0.85"/>
<path d="M54.5 57Q53.7 60.1 54.2 64Q55 60.2 54.5 57Z" fill="#640822" opacity="0.85"/>
<path d="M50.8 54.6Q49.2 56 48.5 58.5Q50.4 56.8 50.8 54.6Z" fill="#7a0a2c" opacity="0.85"/>
<path d="M37.1 41.4Q34.2 42.6 31.8 45.6Q35.2 43.9 37.1 41.4Z" fill="#640822" opacity="0.85"/>
<path d="M52.4 66.2Q51.6 69 51.7 72.6Q52.6 69.1 52.4 66.2Z" fill="#7a0a2c" opacity="0.85"/>
<path d="M28.4 72.5Q27 74 27 76.4Q28.5 74.5 28.4 72.5Z" fill="#7a0a2c" opacity="0.85"/>
<path d="M35.8 70.1Q33.2 72.5 31.6 76.5Q34.6 73.4 35.8 70.1Z" fill="#900e36" opacity="0.85"/>
<path d="M56.6 79Q54.7 80.8 54.3 83.8Q56.4 81.6 56.6 79Z" fill="#7a0a2c" opacity="0.85"/>
<path d="M61.1 59.7Q61.2 62.3 63 64.7Q62.7 61.7 61.1 59.7Z" fill="#7a0a2c" opacity="0.85"/>
<path d="M65.7 42.5Q68.3 44.8 72.4 45.8Q69.1 43.2 65.7 42.5Z" fill="#640822" opacity="0.85"/>
<path d="M53.3 48.6Q53.9 50.6 56.1 51.8Q55.2 49.4 53.3 48.6Z" fill="#7a0a2c" opacity="0.85"/>
<path d="M47.2 49.7Q48.5 52.5 51 55.3Q49.3 51.9 47.2 49.7Z" fill="#640822" opacity="0.85"/>
<path d="M22.6 57.4Q21.7 60.4 22.2 64.3Q23.2 60.5 22.6 57.4Z" fill="#7a0a2c" opacity="0.85"/>
<path d="M53 64.9Q51.8 67.1 52.1 70.2Q53.4 67.4 53 64.9Z" fill="#900e36" opacity="0.85"/>
<path d="M59.3 69.4Q57.8 72 57 75.6Q58.7 72.4 59.3 69.4Z" fill="#7a0a2c" opacity="0.85"/>
<path d="M63.3 59.5Q65.1 62.2 68.3 64.4Q66 61.3 63.3 59.5Z" fill="#7a0a2c" opacity="0.85"/>
<path d="M30.9 46.8Q28.2 48.8 26.1 52.3Q29.3 49.7 30.9 46.8Z" fill="#640822" opacity="0.85"/>
<path d="M35.5 69.2Q33.2 72 31.8 76.2Q34.4 72.7 35.5 69.2Z" fill="#900e36" opacity="0.85"/>
<path d="M57.7 76Q58.4 78.6 60.4 81.2Q59.3 78.1 57.7 76Z" fill="#900e36" opacity="0.85"/>
<path d="M36.5 51Q36.7 54.6 38.4 58.6Q38 54.3 36.5 51Z" fill="#900e36" opacity="0.85"/>
<path d="M51.8 44.4Q51.7 47.6 53.1 51.3Q53 47.4 51.8 44.4Z" fill="#900e36" opacity="0.85"/>
<path d="M56 76.5Q57.4 79.2 60.2 81.2Q58.5 78.2 56 76.5Z" fill="#900e36" opacity="0.85"/>
<path d="M44 48.4Q44.2 51.5 46.5 54.4Q46 50.7 44 48.4Z" fill="#7a0a2c" opacity="0.85"/>
<path d="M51.5 59.4Q50.2 61.7 50.7 64.8Q52.1 62 51.5 59.4Z" fill="#900e36" opacity="0.85"/>
<path d="M28.2 62.2Q26.6 64.5 26.4 67.9Q28.2 65 28.2 62.2Z" fill="#7a0a2c" opacity="0.85"/>
<path d="M42.6 54.3Q43.2 57.1 45.6 59.8Q44.6 56.4 42.6 54.3Z" fill="#640822" opacity="0.85"/>
<path d="M34.4 46.2Q34.8 48.1 36.7 49.6Q36.1 47.2 34.4 46.2Z" fill="#900e36" opacity="0.85"/>
<path d="M49.6 69.7Q50.1 71.7 52.1 73.1Q51.3 70.8 49.6 69.7Z" fill="#7a0a2c" opacity="0.85"/>
<path d="M64.2 50Q65.5 52.9 68.4 55.3Q66.7 51.9 64.2 50Z" fill="#640822" opacity="0.85"/>
<path d="M38.7 45.5Q37.3 48.6 37.2 52.7Q38.7 48.9 38.7 45.5Z" fill="#7a0a2c" opacity="0.85"/>
<path d="M64.5 57.2Q63.9 60.6 65 64.6Q65.5 60.5 64.5 57.2Z" fill="#900e36" opacity="0.85"/>
<path d="M71.1 48.2Q70.2 51 70.3 54.5Q71.3 51.1 71.1 48.2Z" fill="#7a0a2c" opacity="0.85"/>
<path d="M58.8 72.5Q58.4 75.4 60.1 78.5Q60.3 75 58.8 72.5Z" fill="#640822" opacity="0.85"/>
<path d="M47.1 53.4Q46.6 55.9 48.1 58.4Q48.6 55.5 47.1 53.4Z" fill="#7a0a2c" opacity="0.85"/>
<path d="M31.3 44.3Q28.7 44.3 26 46Q29.2 45.8 31.3 44.3Z" fill="#640822" opacity="0.85"/>
<path d="M46.7 51.6Q45 53.2 44.3 56Q46.2 53.9 46.7 51.6Z" fill="#900e36" opacity="0.85"/>
<path d="M69.7 47.2Q67.2 49.5 65.9 53.5Q68.8 50.5 69.7 47.2Z" fill="#900e36" opacity="0.85"/>
<path d="M49.1 80.9Q47.8 83.5 48.3 87Q49.7 83.8 49.1 80.9Z" fill="#900e36" opacity="0.85"/>
<path d="M41.1 63.1Q40.7 66.4 41.7 70.3Q42 66.3 41.1 63.1Z" fill="#900e36" opacity="0.85"/>
<path d="M53.4 79.6Q52.5 81.7 52.5 84.5Q53.5 81.9 53.4 79.6Z" fill="#7a0a2c" opacity="0.85"/>
<path d="M59.6 70.7Q60.3 74.1 62.5 77.7Q61.6 73.6 59.6 70.7Z" fill="#7a0a2c" opacity="0.85"/>
<path d="M26.5 64.4Q24.3 65.7 22.9 68.4Q25.4 66.7 26.5 64.4Z" fill="#7a0a2c" opacity="0.85"/>
<path d="M43.5 43Q40.9 45.1 39.4 48.8Q42.3 46.1 43.5 43Z" fill="#7a0a2c" opacity="0.85"/>
<path d="M58.6 57.8Q58 60.1 59.1 62.7Q59.7 59.9 58.6 57.8Z" fill="#7a0a2c" opacity="0.85"/>
<path d="M52.9 42.7Q49.9 43.3 47.4 45.9Q50.9 45 52.9 42.7Z" fill="#640822" opacity="0.85"/>
<path d="M34.9 57.4Q33.7 59.2 33.8 61.8Q35.1 59.6 34.9 57.4Z" fill="#7a0a2c" opacity="0.85"/>
<path d="M35.7 48.4Q35.6 51.5 37.1 54.9Q37.1 51.2 35.7 48.4Z" fill="#900e36" opacity="0.85"/>
<path d="M33.8 56.8Q34.7 60 37.4 62.9Q36.1 59.1 33.8 56.8Z" fill="#900e36" opacity="0.85"/>
<path d="M62.8 67.2Q62 69.3 62.8 71.8Q63.6 69.3 62.8 67.2Z" fill="#900e36" opacity="0.85"/>
<path d="M36.4 58.9Q35.4 60.7 35.4 63.3Q36.6 61 36.4 58.9Z" fill="#900e36" opacity="0.85"/>
<path d="M39.1 55.4Q39.5 58 41.8 60.2Q41.1 57.1 39.1 55.4Z" fill="#900e36" opacity="0.85"/>
<path d="M50.1 46Q49.8 48.9 50.6 52.3Q50.8 48.8 50.1 46Z" fill="#7a0a2c" opacity="0.85"/>
<path d="M44.8 46.6Q42.8 49 42 52.7Q44.2 49.7 44.8 46.6Z" fill="#900e36" opacity="0.85"/>
<path d="M53.1 75.5Q54.3 78.7 56.8 81.9Q55.3 78.1 53.1 75.5Z" fill="#640822" opacity="0.85"/>
<path d="M34.8 44.1Q37.6 46.4 42 47.3Q38.4 44.7 34.8 44.1Z" fill="#7a0a2c" opacity="0.85"/>
<path d="M40.9 41.7Q40.1 43.8 41.1 46.3Q41.9 43.7 40.9 41.7Z" fill="#640822" opacity="0.85"/>
<path d="M27.4 46.1Q25.7 47.3 24.7 49.7Q26.7 48.1 27.4 46.1Z" fill="#640822" opacity="0.85"/>
<path d="M26.1 74.8Q24.2 75.6 22.5 77.6Q24.8 76.5 26.1 74.8Z" fill="#7a0a2c" opacity="0.85"/>
<path d="M30.8 52.2Q30.2 54.7 31.2 57.6Q31.8 54.6 30.8 52.2Z" fill="#900e36" opacity="0.85"/>
<path d="M45.9 61.7Q43.3 62.5 41.4 65.1Q44.4 64 45.9 61.7Z" fill="#640822" opacity="0.85"/>
<path d="M54.1 52.7Q52.8 56.1 52.5 60.4Q54.1 56.3 54.1 52.7Z" fill="#640822" opacity="0.85"/>
<path d="M45.7 74.6Q44.9 77.6 45.2 81.4Q46.1 77.7 45.7 74.6Z" fill="#900e36" opacity="0.85"/>
<path d="M54.5 66.4Q53.3 68.3 53.3 71Q54.6 68.7 54.5 66.4Z" fill="#640822" opacity="0.85"/>
<path d="M31.3 54.9Q30.1 56.9 30.7 59.7Q32 57.2 31.3 54.9Z" fill="#640822" opacity="0.85"/>
<path d="M67.1 66.1Q68.4 67.7 70.8 68.7Q69.1 66.8 67.1 66.1Z" fill="#7a0a2c" opacity="0.85"/>
<path d="M40.8 49.3Q39.9 52.7 40.1 56.8Q41.1 52.8 40.8 49.3Z" fill="#640822" opacity="0.85"/>
<path d="M27.7 53Q28.2 55.3 30.4 57.2Q29.6 54.4 27.7 53Z" fill="#900e36" opacity="0.85"/>
<path d="M64.3 54.1Q64 57.5 65.3 61.4Q65.5 57.3 64.3 54.1Z" fill="#7a0a2c" opacity="0.85"/>
<path d="M50.2 44.8Q50.5 48 52.3 51.5Q51.8 47.6 50.2 44.8Z" fill="#7a0a2c" opacity="0.85"/>
<path d="M40.5 49.9Q37.6 50.1 35.2 52.6Q38.6 52.1 40.5 49.9Z" fill="#d41a54"/>
<path d="M40 51.4Q35.3 53.2 31.7 58.1Q37.2 55.6 40 51.4Z" fill="#dc205c"/>
<path d="M40.6 50.7Q36.7 53.3 34 58.3Q38.6 55 40.6 50.7Z" fill="#e02664"/>
<path d="M39.2 51.2Q36 53.3 34.1 57.4Q37.7 54.7 39.2 51.2Z" fill="#ee3c74"/>
<path d="M40.7 51.3Q38 53 38.2 56.8Q41.2 54.5 40.7 51.3Z" fill="#dc205c"/>
<path d="M40.6 50.4Q38.1 54.4 37.6 60.1Q40.5 55.1 40.6 50.4Z" fill="#f65c90"/>
<path d="M40.8 51.3Q38.7 56.3 38.4 62.9Q40.8 56.7 40.8 51.3Z" fill="#ee3c74"/>
<path d="M39.6 50.8Q38.6 56.8 39.7 64.1Q40.8 56.8 39.6 50.8Z" fill="#e02664"/>
<path d="M40.7 51.2Q40.1 55.5 42.6 60.3Q43 55 40.7 51.2Z" fill="#e02664"/>
<path d="M41.6 50.1Q41.2 53.6 43.9 56.8Q44.1 52.6 41.6 50.1Z" fill="#f65c90"/>
<path d="M42.7 49.9Q43.7 53.5 47.1 56.3Q45.7 52.1 42.7 49.9Z" fill="#e02664"/>
<path d="M42.1 50.8Q42.5 56.1 46.5 61Q45.6 54.7 42.1 50.8Z" fill="#e02664"/>
<path d="M41.2 51.4Q42.2 55.3 46.1 58.3Q44.6 53.7 41.2 51.4Z" fill="#dc205c"/>
<path d="M42 49.6Q42.9 52.5 46.1 54.1Q44.8 50.8 42 49.6Z" fill="#f04c82"/>
<path d="M41.4 50.6Q42.9 53.6 46.7 54Q44.7 50.8 41.4 50.6Z" fill="#dc205c"/>
<path d="M41.7 50.9Q43.7 54 47.7 55.8Q45.1 52.2 41.7 50.9Z" fill="#f65c90"/>
<circle cx="41" cy="50.6" r=".45" fill="#e0906a"/>
<path d="M64.9 46.9Q61.6 47.5 59.4 50.7Q63.2 49.7 64.9 46.9Z" fill="#d41a54"/>
<path d="M65.6 47Q62.9 47.3 61.8 50.3Q65 49.7 65.6 47Z" fill="#f65c90"/>
<path d="M65.5 46.8Q61.9 48.1 60 52.2Q64.2 50.4 65.5 46.8Z" fill="#dc205c"/>
<path d="M65.7 46.4Q61.7 49.1 59.7 54.6Q64.3 51 65.7 46.4Z" fill="#e8326c"/>
<path d="M64.6 47.7Q61.5 51.9 61.4 58.3Q64.7 52.9 64.6 47.7Z" fill="#ee3c74"/>
<path d="M65.3 47.1Q62.6 51.9 62.2 58.6Q65.3 52.7 65.3 47.1Z" fill="#e8326c"/>
<path d="M65.8 46.6Q64.1 52.2 65.4 59.1Q67.2 52.3 65.8 46.6Z" fill="#f65c90"/>
<path d="M65.5 45.9Q63.7 48.8 65.4 52.4Q67.2 48.9 65.5 45.9Z" fill="#e02664"/>
<path d="M66.8 46.7Q66.4 50.2 68.5 53.8Q68.7 49.6 66.8 46.7Z" fill="#dc205c"/>
<path d="M66.6 47.5Q67.8 52.8 72.1 57.8Q70.4 51.4 66.6 47.5Z" fill="#f65c90"/>
<path d="M66.4 47.1Q66.7 51 70.3 53.8Q69.6 49.2 66.4 47.1Z" fill="#f04c82"/>
<path d="M66.9 46.4Q68.5 49.6 72.2 51.8Q70.1 48.1 66.9 46.4Z" fill="#f65c90"/>
<path d="M66.6 46.4Q69.4 50.3 74.9 52.2Q71.3 47.7 66.6 46.4Z" fill="#dc205c"/>
<path d="M67.8 46.6Q70.8 50.3 76.4 51.5Q72.5 47.3 67.8 46.6Z" fill="#d41a54"/>
<circle cx="66" cy="46.6" r=".45" fill="#e0906a"/>
<path d="M51.8 67.6Q48.5 68.3 45.7 71.1Q49.6 70.1 51.8 67.6Z" fill="#e02664"/>
<path d="M51.2 68.5Q48.7 67.8 46.8 70.1Q49.7 70.6 51.2 68.5Z" fill="#dc205c"/>
<path d="M50.5 69.4Q48 69.9 46.8 72.5Q49.6 71.8 50.5 69.4Z" fill="#d41a54"/>
<path d="M52.3 69Q50.1 71.3 50.3 75.1Q52.7 72.1 52.3 69Z" fill="#e02664"/>
<path d="M51.8 69.6Q49.4 71.8 49.4 75.7Q52 72.8 51.8 69.6Z" fill="#ee3c74"/>
<path d="M52.1 68.3Q51 72.6 52.4 77.8Q53.6 72.5 52.1 68.3Z" fill="#d41a54"/>
<path d="M50.8 68.7Q48.9 73.8 49.2 80.5Q51.3 74.2 50.8 68.7Z" fill="#dc205c"/>
<path d="M52.6 69.6Q51.2 74 53 79.4Q54.3 73.9 52.6 69.6Z" fill="#f65c90"/>
<path d="M52.4 68.1Q52.1 72.9 54.8 78.1Q55 72.2 52.4 68.1Z" fill="#e02664"/>
<path d="M51.8 68.7Q51.7 73.4 55.3 77.9Q55 72.2 51.8 68.7Z" fill="#f65c90"/>
<path d="M52.9 69.7Q53 74.3 56.4 78.7Q55.9 73.2 52.9 69.7Z" fill="#ee3c74"/>
<path d="M53.6 68.3Q55.3 72.9 60.1 76.4Q57.8 70.9 53.6 68.3Z" fill="#f04c82"/>
<path d="M52 69.1Q52.7 72.9 56.5 75.2Q55.4 70.9 52 69.1Z" fill="#ee3c74"/>
<path d="M53.7 69Q55.5 70.7 58.4 70.8Q56.2 68.9 53.7 69Z" fill="#ee3c74"/>
<circle cx="52" cy="68.6" r=".45" fill="#e0906a"/>
<path d="M29.5 66.9Q25.9 67 22.6 69.6Q26.8 69.2 29.5 66.9Z" fill="#e02664"/>
<path d="M29.3 66.9Q25.2 69.2 22.6 74.3Q27.4 71.2 29.3 66.9Z" fill="#f65c90"/>
<path d="M30.1 66.1Q26.4 67.8 24.3 72.1Q28.5 69.8 30.1 66.1Z" fill="#e02664"/>
<path d="M29.5 68Q26.2 71.3 25 76.7Q28.8 72.6 29.5 68Z" fill="#f04c82"/>
<path d="M29.4 67.1Q27 71.8 27.6 78.1Q30.3 72.3 29.4 67.1Z" fill="#ee3c74"/>
<path d="M29.9 67.3Q29.1 72.2 32 77.5Q32.6 71.5 29.9 67.3Z" fill="#e02664"/>
<path d="M30.7 67.2Q30.7 70.1 33.7 71.6Q33.5 68.3 30.7 67.2Z" fill="#f65c90"/>
<path d="M30.8 67.2Q32.6 71.7 37.5 74.8Q35.1 69.5 30.8 67.2Z" fill="#f65c90"/>
<path d="M29.9 66.9Q31.7 71.9 35.8 76.9Q33.5 70.8 29.9 66.9Z" fill="#dc205c"/>
<path d="M30.9 67Q32.7 70.3 36.9 71.8Q34.5 68 30.9 67Z" fill="#f04c82"/>
<circle cx="30" cy="66.6" r=".45" fill="#e0906a"/>
<path d="M49.1 9.9Q49.2 13 52.6 13.2Q52.1 9.8 49.1 9.9Z" fill="#9c2048" opacity="0.7"/>
<path d="M43.1 29.4Q42 32.2 44.7 34.2Q45.6 31 43.1 29.4Z" fill="#7a1636" opacity="0.7"/>
<path d="M39.9 28.2Q37.5 31 39.3 34.9Q41.8 31.4 39.9 28.2Z" fill="#9c2048" opacity="0.7"/>
<path d="M51.6 20.1Q49.8 23.9 53.2 27.3Q54.8 22.8 51.6 20.1Z" fill="#a22450" opacity="0.7"/>
<path d="M53.7 17.6Q54.6 21.1 58.7 21.7Q57.3 17.8 53.7 17.6Z" fill="#8c1a3e" opacity="0.7"/>
<path d="M49.7 26.9Q47.1 28 47.8 31Q50.7 29.6 49.7 26.9Z" fill="#b02a56" opacity="0.7"/>
<path d="M50.6 25.5Q48.1 27.7 50.1 30.9Q52.7 28.1 50.6 25.5Z" fill="#7a1636" opacity="0.7"/>
<path d="M41.5 29.8Q41.8 32.8 44.9 34.4Q44.3 31 41.5 29.8Z" fill="#9c2048" opacity="0.7"/>
<path d="M55.4 15Q53 17 53.5 20.7Q56.1 18.1 55.4 15Z" fill="#a22450" opacity="0.7"/>
<path d="M37.7 32.9Q39.2 36.4 43.4 37.7Q41.4 33.7 37.7 32.9Z" fill="#7a1636" opacity="0.7"/>
<path d="M51.9 20Q49.6 23.1 50.9 27.5Q53.3 23.7 51.9 20Z" fill="#8c1a3e" opacity="0.7"/>
<path d="M55.1 26.5Q52.6 28.4 55 30.8Q57.6 28.5 55.1 26.5Z" fill="#9c2048" opacity="0.7"/>
<path d="M62.1 30.6Q59.8 33.3 62.6 36.3Q64.8 32.9 62.1 30.6Z" fill="#7a1636" opacity="0.7"/>
<path d="M52.5 11.9Q51.8 15.7 55.1 18.7Q55.5 14.3 52.5 11.9Z" fill="#a22450" opacity="0.7"/>
<path d="M50 -.5L46.4 12.5L48.3 12Z" fill="#e48aa8" opacity=".9"/>
<path d="M50 0L51.6 8L50.9 8Z" fill="#8a2448" opacity=".8"/>
</g></defs>
<g clip-path="url(#vp)">
<use href="#tex" transform="matrix(1.5140 0.2330 -0.2620 1.8405 572.70 280.35)"/>
<use href="#tex" transform="matrix(0.7490 -0.6970 0.8695 1.6085 610.95 326.85)"/>
<use href="#tex" transform="matrix(1.5140 0.2330 -0.2620 1.8405 724.10 303.65)"/>
<use href="#tex" transform="matrix(0.7490 -0.6970 0.8695 1.6085 762.35 350.15)"/>
<use href="#tex" transform="matrix(1.5140 0.2330 -0.2620 1.8405 875.50 326.95)"/>
<use href="#tex" transform="matrix(0.7490 -0.6970 0.8695 1.6085 913.75 373.45)"/>
<use href="#tex" transform="matrix(1.5140 0.2330 -0.2620 1.8405 1026.90 350.25)"/>
<use href="#tex" transform="matrix(0.7490 -0.6970 0.8695 1.6085 1065.15 396.75)"/>
<use href="#tex" transform="matrix(1.5140 0.2330 -0.2620 1.8405 1178.30 373.55)"/>
<use href="#tex" transform="matrix(0.7490 -0.6970 0.8695 1.6085 1216.55 420.05)"/>
<use href="#tex" transform="matrix(1.5140 0.2330 -0.2620 1.8405 497.80 350.05)"/>
<use href="#tex" transform="matrix(0.7490 -0.6970 0.8695 1.6085 536.05 396.55)"/>
<use href="#tex" transform="matrix(1.5140 0.2330 -0.2620 1.8405 649.20 373.35)"/>
<use href="#tex" transform="matrix(0.7490 -0.6970 0.8695 1.6085 687.45 419.85)"/>
<use href="#tex" transform="matrix(1.5140 0.2330 -0.2620 1.8405 800.60 396.65)"/>
<use href="#tex" transform="matrix(0.7490 -0.6970 0.8695 1.6085 838.85 443.15)"/>
<use href="#tex" transform="matrix(1.5140 0.2330 -0.2620 1.8405 952.00 419.95)"/>
<use href="#tex" transform="matrix(0.7490 -0.6970 0.8695 1.6085 990.25 466.45)"/>
<use href="#tex" transform="matrix(1.5140 0.2330 -0.2620 1.8405 1103.40 443.25)"/>
<use href="#tex" transform="matrix(0.7490 -0.6970 0.8695 1.6085 1141.65 489.75)"/>
<use href="#tex" transform="matrix(1.5140 0.2330 -0.2620 1.8405 422.90 419.75)"/>
<use href="#tex" transform="matrix(0.7490 -0.6970 0.8695 1.6085 461.15 466.25)"/>
<use href="#tex" transform="matrix(1.5140 0.2330 -0.2620 1.8405 574.30 443.05)"/>
<use href="#tex" transform="matrix(0.7490 -0.6970 0.8695 1.6085 612.55 489.55)"/>
<use href="#tex" transform="matrix(1.5140 0.2330 -0.2620 1.8405 725.70 466.35)"/>
<use href="#tex" transform="matrix(0.7490 -0.6970 0.8695 1.6085 763.95 512.85)"/>
<use href="#tex" transform="matrix(1.5140 0.2330 -0.2620 1.8405 877.10 489.65)"/>
<use href="#tex" transform="matrix(0.7490 -0.6970 0.8695 1.6085 915.35 536.15)"/>
<use href="#tex" transform="matrix(1.5140 0.2330 -0.2620 1.8405 1028.50 512.95)"/>
<use href="#tex" transform="matrix(0.7490 -0.6970 0.8695 1.6085 1066.75 559.45)"/>
<use href="#tex" transform="matrix(1.5140 0.2330 -0.2620 1.8405 348.00 489.45)"/>
<use href="#tex" transform="matrix(0.7490 -0.6970 0.8695 1.6085 386.25 535.95)"/>
<use href="#tex" transform="matrix(1.5140 0.2330 -0.2620 1.8405 499.40 512.75)"/>
<use href="#tex" transform="matrix(0.7490 -0.6970 0.8695 1.6085 537.65 559.25)"/>
<use href="#tex" transform="matrix(1.5140 0.2330 -0.2620 1.8405 650.80 536.05)"/>
<use href="#tex" transform="matrix(0.7490 -0.6970 0.8695 1.6085 689.05 582.55)"/>
<use href="#tex" transform="matrix(1.5140 0.2330 -0.2620 1.8405 802.20 559.35)"/>
<use href="#tex" transform="matrix(0.7490 -0.6970 0.8695 1.6085 840.45 605.85)"/>
<use href="#tex" transform="matrix(1.5140 0.2330 -0.2620 1.8405 953.60 582.65)"/>
<use href="#tex" transform="matrix(0.7490 -0.6970 0.8695 1.6085 991.85 629.15)"/>
<use href="#tex" transform="matrix(1.5140 0.2330 -0.2620 1.8405 273.10 559.15)"/>
<use href="#tex" transform="matrix(0.7490 -0.6970 0.8695 1.6085 311.35 605.65)"/>
<use href="#tex" transform="matrix(1.5140 0.2330 -0.2620 1.8405 424.50 582.45)"/>
<use href="#tex" transform="matrix(0.7490 -0.6970 0.8695 1.6085 462.75 628.95)"/>
<use href="#tex" transform="matrix(1.5140 0.2330 -0.2620 1.8405 575.90 605.75)"/>
<use href="#tex" transform="matrix(0.7490 -0.6970 0.8695 1.6085 614.15 652.25)"/>
<use href="#tex" transform="matrix(1.5140 0.2330 -0.2620 1.8405 727.30 629.05)"/>
<use href="#tex" transform="matrix(0.7490 -0.6970 0.8695 1.6085 765.55 675.55)"/>
<use href="#tex" transform="matrix(1.5140 0.2330 -0.2620 1.8405 878.70 652.35)"/>
<use href="#tex" transform="matrix(0.7490 -0.6970 0.8695 1.6085 916.95 698.85)"/>
</g>
<g stroke-linecap="butt" fill="none">
<line x1="378" y1="932.5" x2="306" y2="921.8" stroke="#00f000" stroke-width="2.2"/>
<path d="M302 920.5L309 916.5L310 926Z" fill="#00d800" stroke="none"/>
<line x1="378" y1="932.5" x2="411" y2="901.5" stroke="#ff0000" stroke-width="1.6"/>
<circle cx="412.3" cy="900.3" r="4.2" fill="#e00000" stroke="none"/>
<line x1="378" y1="932.5" x2="373.2" y2="864" stroke="#0000ff" stroke-width="2.6"/>
<path d="M372.6 856L368 864.5L378 864Z" fill="#0000e0" stroke="none"/>
</g>
<g font-family="Liberation Sans, sans-serif" font-size="20" fill="none" stroke-width=".8">
<text x="372" y="851.8" stroke="#1010ff" textLength="14" lengthAdjust="spacingAndGlyphs">Z</text>
<text x="418" y="896" stroke="#ff1010" textLength="14" lengthAdjust="spacingAndGlyphs">X</text>
<text x="298" y="916" stroke="#10e010" font-size="16" textLength="15" lengthAdjust="spacingAndGlyphs">Y</text>
</g>
</svg>
</div>
<div id="botstrip" class="abs"></div>
<div id="bframe" class="abs"></div>
<div class="abs" style="left:1338px;top:1030px;width:10px;height:10px"><svg width="10" height="10" viewBox="0 0 10 10"><path d="M2 2H9V9H2Z" fill="#686e76"/><path d="M2.5 0V3.5Q2.5 2.5 0 2.5" fill="none" stroke="#2a2d32" stroke-width="1"/><path d="M3.5 0V1.5Q3.5 3.5 0 3.5" fill="none" stroke="rgba(255,255,255,.45)" stroke-width="1"/><path d="M8.5 0V3Q8.5 8.5 3 8.5H0" fill="none" stroke="rgba(235,235,235,.8)" stroke-width="1"/><path d="M10 3Q10 10 3 10H10Z" fill="#2e3238"/><path d="M9.5 0V3Q9.5 9.5 3 9.5H0" fill="none" stroke="#15171a" stroke-width="1"/></svg></div>
</body>
</html>
